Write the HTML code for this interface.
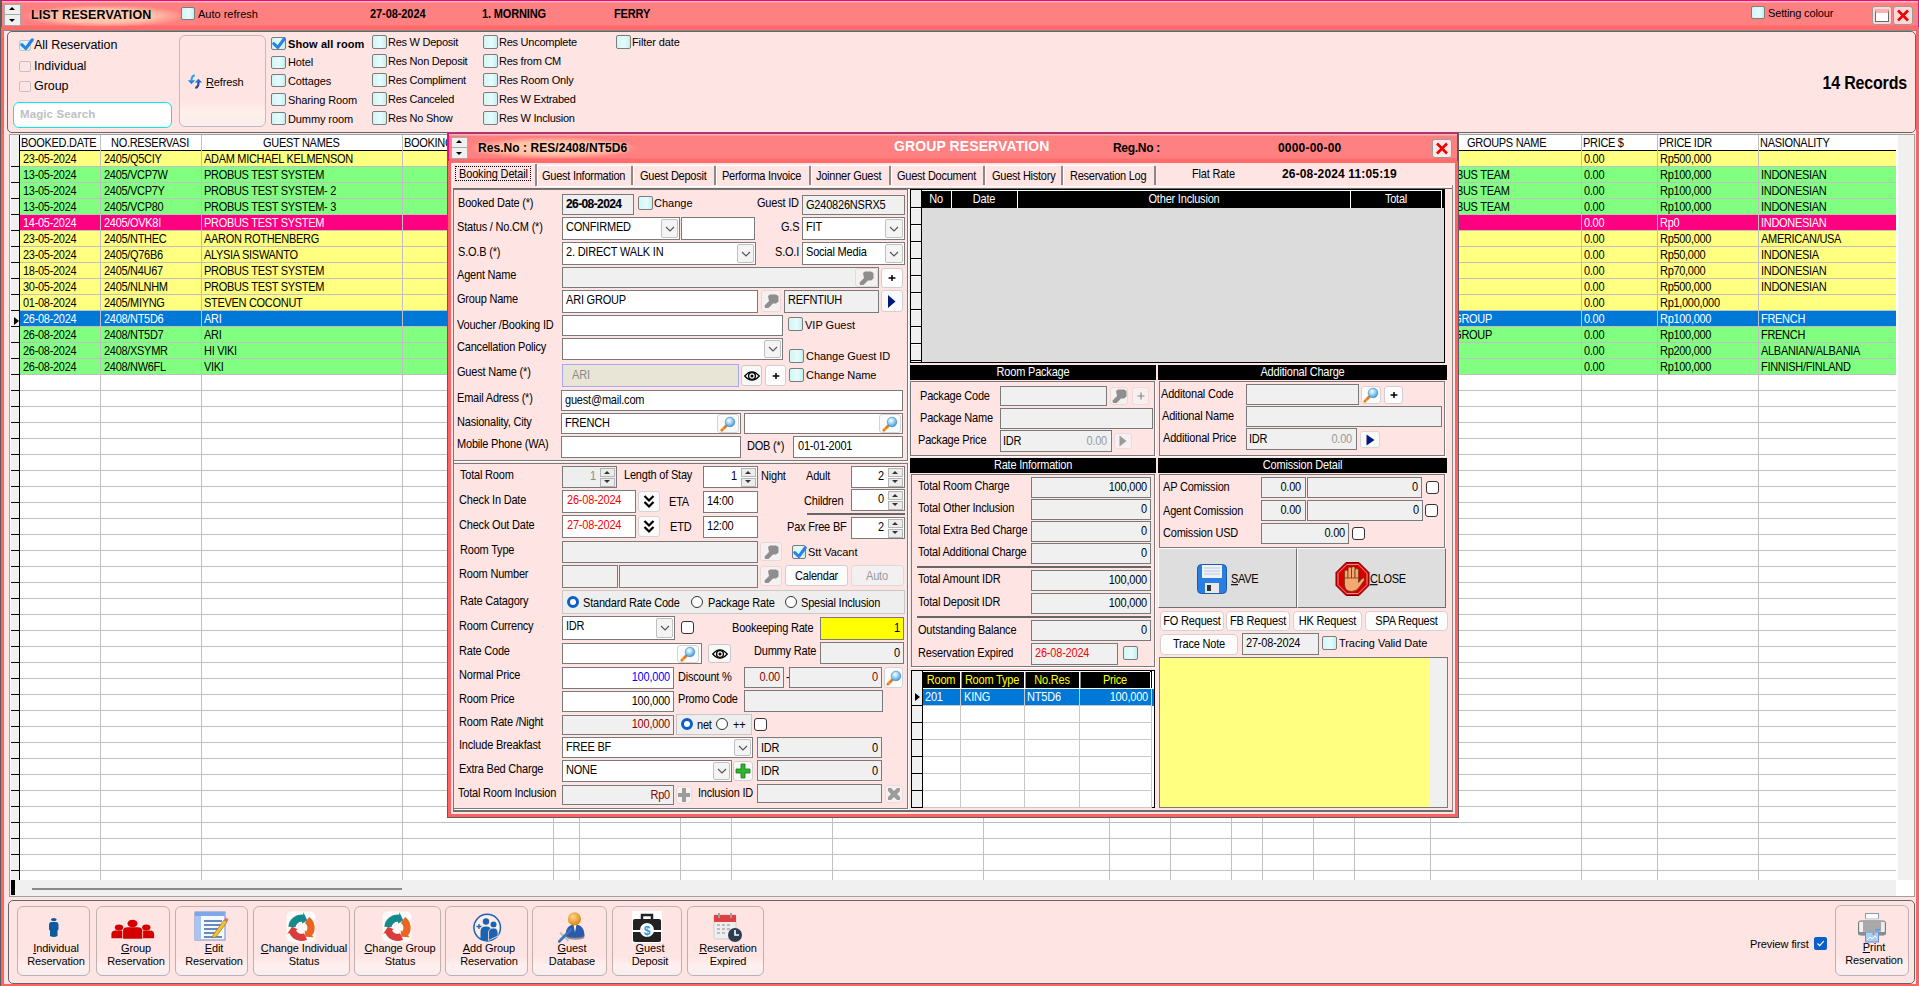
<!DOCTYPE html><html><head><meta charset="utf-8"><style>
html,body{margin:0;padding:0;width:1919px;height:986px;overflow:hidden;background:#ffe4e4}
body{position:relative;font-family:"Liberation Sans",sans-serif}
body div,body span,body svg{position:absolute}
.tx{white-space:nowrap}
svg{overflow:visible}
svg *{position:static}
u{text-decoration:underline;text-underline-offset:1px}
</style></head><body>
<div style="left:0px;top:0px;width:1919px;height:986px;background:#ff6262"></div>
<div style="left:0px;top:0px;width:1px;height:986px;background:#5a5a5a"></div>
<div style="left:1px;top:0px;width:1918px;height:1px;background:#ff0080"></div>
<div style="left:1px;top:1px;width:1px;height:26px;background:#ff0080"></div>
<div style="left:1918px;top:1px;width:1px;height:26px;background:#ff0080"></div>
<div style="left:2px;top:1px;width:1916px;height:29px;background:linear-gradient(#ffb8b8 0,#ffb8b8 1px,#ff8080 2px,#ff8080 24px,#ff6a6a 25px,#ff6a6a 29px)"></div>
<div style="left:22px;top:5px;width:165px;height:22px;background:radial-gradient(ellipse 50% 50% at 50% 50%,rgba(255,208,180,1) 0%,rgba(255,196,170,.95) 60%,rgba(255,128,128,0) 100%)"></div>
<div style="left:4px;top:30px;width:1912px;height:954px;background:#ffe4e4"></div>
<div style="left:4px;top:30px;width:1912px;height:1px;background:#8a8a8a"></div>
<div style="left:4px;top:4px;width:17px;height:22px;background:#a8a8a8"></div>
<div style="left:5px;top:5px;width:15px;height:9px;background:#f0f0f0"></div>
<div style="left:5px;top:15px;width:15px;height:10px;background:#f0f0f0"></div>
<div style="left:9px;top:7px;width:0;height:0;border-left:3px solid transparent;border-right:3px solid transparent;border-bottom:3px solid #000"></div>
<div style="left:9px;top:19px;width:0;height:0;border-left:3px solid transparent;border-right:3px solid transparent;border-top:3px solid #000"></div>
<span class="tx" style="left:31px;top:9px;font-size:12.5px;line-height:12.5px;letter-spacing:0.1px;font-weight:700;color:#000;text-shadow:0 0 2px #ffd8c0">LIST RESERVATION</span>
<div style="left:181px;top:7px;width:14px;height:13px;background:linear-gradient(90deg,#d2f6f6,#e6fbfb 60%,#c4f0f0);border:1px solid #7c7c7c;border-radius:2px;box-sizing:border-box"></div>
<span class="tx" style="left:198px;top:9px;font-size:11px;line-height:11px;letter-spacing:0px;font-weight:400;color:#000;">Auto refresh</span>
<span class="tx" style="left:370px;top:9px;font-size:11px;line-height:11px;letter-spacing:-0.08px;font-weight:700;color:#000;transform:scaleY(1.08);transform-origin:0 9px;">27-08-2024</span>
<span class="tx" style="left:482px;top:9px;font-size:11px;line-height:11px;letter-spacing:-0.15px;font-weight:700;color:#000;transform:scaleY(1.08);transform-origin:0 9px;">1. MORNING</span>
<span class="tx" style="left:614px;top:9px;font-size:11px;line-height:11px;letter-spacing:-0.15px;font-weight:700;color:#000;transform:scaleY(1.08);transform-origin:0 9px;">FERRY</span>
<div style="left:1751px;top:6px;width:14px;height:13px;background:linear-gradient(90deg,#d2f6f6,#e6fbfb 60%,#c4f0f0);border:1px solid #7c7c7c;border-radius:2px;box-sizing:border-box"></div>
<span class="tx" style="left:1768px;top:8px;font-size:11px;line-height:11px;letter-spacing:-0.15px;font-weight:400;color:#000;">Setting colour</span>
<div style="left:1872px;top:6px;width:20px;height:19px;background:#ffd8d8;border:1px solid #9a9a9a;border-radius:3px;box-sizing:border-box"></div>
<div style="left:1875px;top:9px;width:14px;height:13px;background:#fff;border:1px solid #6a6a6a;box-sizing:border-box;border-top:4px solid #ffb0b0"></div>
<div style="left:1893px;top:6px;width:20px;height:19px;background:#ffd8d8;border:1px solid #9a9a9a;border-radius:3px;box-sizing:border-box"></div>
<svg style="left:1896px;top:9px" width="14" height="13" viewBox="0 0 14 13"><path d="M2 1.5 L12 11.5 M12 1.5 L2 11.5" stroke="#f00000" stroke-width="2.6"/></svg>
<div style="left:7px;top:31px;width:1909px;height:102px;border:1px solid #666;border-radius:5px;box-sizing:border-box"></div>
<div style="left:19px;top:40px;width:12px;height:11px;background:linear-gradient(90deg,#d2f6f6,#e6fbfb 60%,#c4f0f0);border:1px solid #c4c4c4;border-radius:2px;box-sizing:border-box"></div>
<svg style="left:19px;top:40px" width="12" height="11" viewBox="0 0 12 11"><path d="M2.8 4.6 L6.8 8.5 L13.3 -0.1999999999999993" stroke="#2a82e6" stroke-width="3.1" fill="none" stroke-linecap="round" stroke-linejoin="round"/></svg>
<span class="tx" style="left:34px;top:39px;font-size:12.5px;line-height:12.5px;letter-spacing:-0.05px;font-weight:400;color:#000;">All Reservation</span>
<div style="left:19px;top:61px;width:12px;height:11px;background:transparent;border:1px solid #c8c0c0;border-radius:2px;box-sizing:border-box"></div>
<span class="tx" style="left:34px;top:60px;font-size:12.5px;line-height:12.5px;letter-spacing:-0.05px;font-weight:400;color:#000;">Individual</span>
<div style="left:19px;top:81px;width:12px;height:11px;background:transparent;border:1px solid #c8c0c0;border-radius:2px;box-sizing:border-box"></div>
<span class="tx" style="left:34px;top:80px;font-size:12.5px;line-height:12.5px;letter-spacing:-0.05px;font-weight:400;color:#000;">Group</span>
<div style="left:13px;top:102px;width:159px;height:26px;background:#fff;border:1.6px solid #00eaf0;border-radius:6px;box-sizing:border-box"></div>
<span class="tx" style="left:20px;top:109px;font-size:11.5px;line-height:11.5px;letter-spacing:0.1px;font-weight:700;color:#c0c0c0;">Magic Search</span>
<div style="left:179px;top:35px;width:87px;height:92px;border:1px solid #c8b8b8;border-radius:6px;box-sizing:border-box;background:linear-gradient(#ffe4e4 70%,#fff0ea 85%,#f8eef0)"></div>
<svg style="left:180px;top:66px" width="30" height="30" viewBox="0 0 30 30"><path d="M7.8 14.3 H15.2 L11.5 18.3z" fill="#2f7fd4"/><path d="M11.5 15 Q11.3 10.2 14.8 9.3" stroke="#2aa6e2" stroke-width="2.1" fill="none"/><path d="M14.8 16.6 H22.2 L18.5 12.8z" fill="#2a6cc4"/><path d="M18.5 16 Q18.7 21 15.3 22" stroke="#1d4f9e" stroke-width="2.1" fill="none"/></svg>
<span class="tx" style="left:206px;top:77px;font-size:11px;line-height:11px;letter-spacing:-0.15px;font-weight:400;color:#000;"><u>R</u>efresh</span>
<div style="left:271px;top:37px;width:15px;height:13px;background:linear-gradient(90deg,#d2f6f6,#e6fbfb 60%,#c4f0f0);border:1px solid #7c7c7c;border-radius:2px;box-sizing:border-box"></div>
<svg style="left:271px;top:37px" width="15" height="13" viewBox="0 0 15 13"><path d="M2.8 6.6 L6.8 10.5 L13.3 1.8000000000000007" stroke="#2a82e6" stroke-width="3.1" fill="none" stroke-linecap="round" stroke-linejoin="round"/></svg>
<span class="tx" style="left:288px;top:39px;font-size:11px;line-height:11px;letter-spacing:0.1px;font-weight:700;color:#000;">Show all room</span>
<div style="left:271px;top:56px;width:15px;height:13px;background:linear-gradient(90deg,#d2f6f6,#e6fbfb 60%,#c4f0f0);border:1px solid #7c7c7c;border-radius:2px;box-sizing:border-box"></div>
<span class="tx" style="left:288px;top:57px;font-size:11px;line-height:11px;letter-spacing:-0.1px;font-weight:400;color:#000;">Hotel</span>
<div style="left:271px;top:74px;width:15px;height:13px;background:linear-gradient(90deg,#d2f6f6,#e6fbfb 60%,#c4f0f0);border:1px solid #7c7c7c;border-radius:2px;box-sizing:border-box"></div>
<span class="tx" style="left:288px;top:76px;font-size:11px;line-height:11px;letter-spacing:-0.1px;font-weight:400;color:#000;">Cottages</span>
<div style="left:271px;top:93px;width:15px;height:13px;background:linear-gradient(90deg,#d2f6f6,#e6fbfb 60%,#c4f0f0);border:1px solid #7c7c7c;border-radius:2px;box-sizing:border-box"></div>
<span class="tx" style="left:288px;top:95px;font-size:11px;line-height:11px;letter-spacing:-0.1px;font-weight:400;color:#000;">Sharing Room</span>
<div style="left:271px;top:112px;width:15px;height:13px;background:linear-gradient(90deg,#d2f6f6,#e6fbfb 60%,#c4f0f0);border:1px solid #7c7c7c;border-radius:2px;box-sizing:border-box"></div>
<span class="tx" style="left:288px;top:114px;font-size:11px;line-height:11px;letter-spacing:-0.1px;font-weight:400;color:#000;">Dummy room</span>
<div style="left:372px;top:35px;width:15px;height:14px;background:linear-gradient(90deg,#d2f6f6,#e6fbfb 60%,#c4f0f0);border:1px solid #7c7c7c;border-radius:2px;box-sizing:border-box"></div>
<span class="tx" style="left:388px;top:37px;font-size:11px;line-height:11px;letter-spacing:-0.25px;font-weight:400;color:#000;">Res W Deposit</span>
<div style="left:372px;top:54px;width:15px;height:14px;background:linear-gradient(90deg,#d2f6f6,#e6fbfb 60%,#c4f0f0);border:1px solid #7c7c7c;border-radius:2px;box-sizing:border-box"></div>
<span class="tx" style="left:388px;top:56px;font-size:11px;line-height:11px;letter-spacing:-0.25px;font-weight:400;color:#000;">Res Non Deposit</span>
<div style="left:372px;top:73px;width:15px;height:14px;background:linear-gradient(90deg,#d2f6f6,#e6fbfb 60%,#c4f0f0);border:1px solid #7c7c7c;border-radius:2px;box-sizing:border-box"></div>
<span class="tx" style="left:388px;top:75px;font-size:11px;line-height:11px;letter-spacing:-0.25px;font-weight:400;color:#000;">Res Compliment</span>
<div style="left:372px;top:92px;width:15px;height:14px;background:linear-gradient(90deg,#d2f6f6,#e6fbfb 60%,#c4f0f0);border:1px solid #7c7c7c;border-radius:2px;box-sizing:border-box"></div>
<span class="tx" style="left:388px;top:94px;font-size:11px;line-height:11px;letter-spacing:-0.25px;font-weight:400;color:#000;">Res Canceled</span>
<div style="left:372px;top:111px;width:15px;height:14px;background:linear-gradient(90deg,#d2f6f6,#e6fbfb 60%,#c4f0f0);border:1px solid #7c7c7c;border-radius:2px;box-sizing:border-box"></div>
<span class="tx" style="left:388px;top:113px;font-size:11px;line-height:11px;letter-spacing:-0.25px;font-weight:400;color:#000;">Res No Show</span>
<div style="left:483px;top:35px;width:15px;height:14px;background:linear-gradient(90deg,#d2f6f6,#e6fbfb 60%,#c4f0f0);border:1px solid #7c7c7c;border-radius:2px;box-sizing:border-box"></div>
<span class="tx" style="left:499px;top:37px;font-size:11px;line-height:11px;letter-spacing:-0.25px;font-weight:400;color:#000;">Res Uncomplete</span>
<div style="left:483px;top:54px;width:15px;height:14px;background:linear-gradient(90deg,#d2f6f6,#e6fbfb 60%,#c4f0f0);border:1px solid #7c7c7c;border-radius:2px;box-sizing:border-box"></div>
<span class="tx" style="left:499px;top:56px;font-size:11px;line-height:11px;letter-spacing:-0.25px;font-weight:400;color:#000;">Res from CM</span>
<div style="left:483px;top:73px;width:15px;height:14px;background:linear-gradient(90deg,#d2f6f6,#e6fbfb 60%,#c4f0f0);border:1px solid #7c7c7c;border-radius:2px;box-sizing:border-box"></div>
<span class="tx" style="left:499px;top:75px;font-size:11px;line-height:11px;letter-spacing:-0.25px;font-weight:400;color:#000;">Res Room Only</span>
<div style="left:483px;top:92px;width:15px;height:14px;background:linear-gradient(90deg,#d2f6f6,#e6fbfb 60%,#c4f0f0);border:1px solid #7c7c7c;border-radius:2px;box-sizing:border-box"></div>
<span class="tx" style="left:499px;top:94px;font-size:11px;line-height:11px;letter-spacing:-0.25px;font-weight:400;color:#000;">Res W Extrabed</span>
<div style="left:483px;top:111px;width:15px;height:14px;background:linear-gradient(90deg,#d2f6f6,#e6fbfb 60%,#c4f0f0);border:1px solid #7c7c7c;border-radius:2px;box-sizing:border-box"></div>
<span class="tx" style="left:499px;top:113px;font-size:11px;line-height:11px;letter-spacing:-0.25px;font-weight:400;color:#000;">Res W Inclusion</span>
<div style="left:616px;top:35px;width:15px;height:14px;background:linear-gradient(90deg,#d2f6f6,#e6fbfb 60%,#c4f0f0);border:1px solid #7c7c7c;border-radius:2px;box-sizing:border-box"></div>
<span class="tx" style="left:632px;top:37px;font-size:11px;line-height:11px;letter-spacing:-0.1px;font-weight:400;color:#000;">Filter date</span>
<span class="tx" style="left:1507px;width:400px;text-align:right;top:76px;font-size:16px;line-height:16px;letter-spacing:-0.17px;font-weight:700;color:#000;transform:scaleY(1.15);transform-origin:0 14px;">14 Records</span>
<div style="left:9px;top:134px;width:1906px;height:763px;background:#fff;border:1px solid #a0a0a0;box-sizing:border-box"></div>
<div style="left:1896px;top:135px;width:18px;height:745px;background:#f0f0f0;border-left:2px solid #fff;box-sizing:border-box"></div>
<div style="left:10px;top:135px;width:1886px;height:15px;background:#fff"></div>
<div style="left:10px;top:150px;width:1886px;height:1px;background:#000"></div>
<div style="left:10px;top:135px;width:9px;height:745px;background:#f0f0f0;border-left:1px solid #fff;box-sizing:border-box"></div>
<div style="left:19px;top:135px;width:1px;height:745px;background:#000"></div>
<div style="left:20px;top:151px;width:1876px;height:15px;background:#ffff80"></div>
<div style="left:20px;top:167px;width:1876px;height:15px;background:#80ff80"></div>
<div style="left:20px;top:183px;width:1876px;height:15px;background:#80ff80"></div>
<div style="left:20px;top:199px;width:1876px;height:15px;background:#80ff80"></div>
<div style="left:20px;top:215px;width:1876px;height:15px;background:#ff0080"></div>
<div style="left:20px;top:231px;width:1876px;height:15px;background:#ffff80"></div>
<div style="left:20px;top:247px;width:1876px;height:15px;background:#ffff80"></div>
<div style="left:20px;top:263px;width:1876px;height:15px;background:#ffff80"></div>
<div style="left:20px;top:279px;width:1876px;height:15px;background:#ffff80"></div>
<div style="left:20px;top:295px;width:1876px;height:15px;background:#ffff80"></div>
<div style="left:20px;top:311px;width:1876px;height:15px;background:#0078d7"></div>
<div style="left:20px;top:327px;width:1876px;height:15px;background:#80ff80"></div>
<div style="left:20px;top:343px;width:1876px;height:15px;background:#80ff80"></div>
<div style="left:20px;top:359px;width:1876px;height:15px;background:#80ff80"></div>
<div style="left:20px;top:166px;width:1876px;height:1px;background:#c0c0c0"></div>
<div style="left:11px;top:166px;width:8px;height:1px;background:#000"></div>
<div style="left:20px;top:182px;width:1876px;height:1px;background:#c0c0c0"></div>
<div style="left:11px;top:182px;width:8px;height:1px;background:#000"></div>
<div style="left:20px;top:198px;width:1876px;height:1px;background:#c0c0c0"></div>
<div style="left:11px;top:198px;width:8px;height:1px;background:#000"></div>
<div style="left:20px;top:214px;width:1876px;height:1px;background:#c0c0c0"></div>
<div style="left:11px;top:214px;width:8px;height:1px;background:#000"></div>
<div style="left:20px;top:230px;width:1876px;height:1px;background:#c0c0c0"></div>
<div style="left:11px;top:230px;width:8px;height:1px;background:#000"></div>
<div style="left:20px;top:246px;width:1876px;height:1px;background:#c0c0c0"></div>
<div style="left:11px;top:246px;width:8px;height:1px;background:#000"></div>
<div style="left:20px;top:262px;width:1876px;height:1px;background:#c0c0c0"></div>
<div style="left:11px;top:262px;width:8px;height:1px;background:#000"></div>
<div style="left:20px;top:278px;width:1876px;height:1px;background:#c0c0c0"></div>
<div style="left:11px;top:278px;width:8px;height:1px;background:#000"></div>
<div style="left:20px;top:294px;width:1876px;height:1px;background:#c0c0c0"></div>
<div style="left:11px;top:294px;width:8px;height:1px;background:#000"></div>
<div style="left:20px;top:310px;width:1876px;height:1px;background:#c0c0c0"></div>
<div style="left:11px;top:310px;width:8px;height:1px;background:#000"></div>
<div style="left:20px;top:326px;width:1876px;height:1px;background:#c0c0c0"></div>
<div style="left:11px;top:326px;width:8px;height:1px;background:#000"></div>
<div style="left:20px;top:342px;width:1876px;height:1px;background:#c0c0c0"></div>
<div style="left:11px;top:342px;width:8px;height:1px;background:#000"></div>
<div style="left:20px;top:358px;width:1876px;height:1px;background:#c0c0c0"></div>
<div style="left:11px;top:358px;width:8px;height:1px;background:#000"></div>
<div style="left:20px;top:374px;width:1876px;height:1px;background:#c0c0c0"></div>
<div style="left:11px;top:374px;width:8px;height:1px;background:#000"></div>
<div style="left:20px;top:390px;width:1876px;height:1px;background:#c0c0c0"></div>
<div style="left:11px;top:390px;width:8px;height:1px;background:#000"></div>
<div style="left:20px;top:406px;width:1876px;height:1px;background:#c0c0c0"></div>
<div style="left:11px;top:406px;width:8px;height:1px;background:#000"></div>
<div style="left:20px;top:422px;width:1876px;height:1px;background:#c0c0c0"></div>
<div style="left:11px;top:422px;width:8px;height:1px;background:#000"></div>
<div style="left:20px;top:438px;width:1876px;height:1px;background:#c0c0c0"></div>
<div style="left:11px;top:438px;width:8px;height:1px;background:#000"></div>
<div style="left:20px;top:454px;width:1876px;height:1px;background:#c0c0c0"></div>
<div style="left:11px;top:454px;width:8px;height:1px;background:#000"></div>
<div style="left:20px;top:470px;width:1876px;height:1px;background:#c0c0c0"></div>
<div style="left:11px;top:470px;width:8px;height:1px;background:#000"></div>
<div style="left:20px;top:486px;width:1876px;height:1px;background:#c0c0c0"></div>
<div style="left:11px;top:486px;width:8px;height:1px;background:#000"></div>
<div style="left:20px;top:502px;width:1876px;height:1px;background:#c0c0c0"></div>
<div style="left:11px;top:502px;width:8px;height:1px;background:#000"></div>
<div style="left:20px;top:518px;width:1876px;height:1px;background:#c0c0c0"></div>
<div style="left:11px;top:518px;width:8px;height:1px;background:#000"></div>
<div style="left:20px;top:534px;width:1876px;height:1px;background:#c0c0c0"></div>
<div style="left:11px;top:534px;width:8px;height:1px;background:#000"></div>
<div style="left:20px;top:550px;width:1876px;height:1px;background:#c0c0c0"></div>
<div style="left:11px;top:550px;width:8px;height:1px;background:#000"></div>
<div style="left:20px;top:566px;width:1876px;height:1px;background:#c0c0c0"></div>
<div style="left:11px;top:566px;width:8px;height:1px;background:#000"></div>
<div style="left:20px;top:582px;width:1876px;height:1px;background:#c0c0c0"></div>
<div style="left:11px;top:582px;width:8px;height:1px;background:#000"></div>
<div style="left:20px;top:598px;width:1876px;height:1px;background:#c0c0c0"></div>
<div style="left:11px;top:598px;width:8px;height:1px;background:#000"></div>
<div style="left:20px;top:614px;width:1876px;height:1px;background:#c0c0c0"></div>
<div style="left:11px;top:614px;width:8px;height:1px;background:#000"></div>
<div style="left:20px;top:630px;width:1876px;height:1px;background:#c0c0c0"></div>
<div style="left:11px;top:630px;width:8px;height:1px;background:#000"></div>
<div style="left:20px;top:646px;width:1876px;height:1px;background:#c0c0c0"></div>
<div style="left:11px;top:646px;width:8px;height:1px;background:#000"></div>
<div style="left:20px;top:662px;width:1876px;height:1px;background:#c0c0c0"></div>
<div style="left:11px;top:662px;width:8px;height:1px;background:#000"></div>
<div style="left:20px;top:678px;width:1876px;height:1px;background:#c0c0c0"></div>
<div style="left:11px;top:678px;width:8px;height:1px;background:#000"></div>
<div style="left:20px;top:694px;width:1876px;height:1px;background:#c0c0c0"></div>
<div style="left:11px;top:694px;width:8px;height:1px;background:#000"></div>
<div style="left:20px;top:710px;width:1876px;height:1px;background:#c0c0c0"></div>
<div style="left:11px;top:710px;width:8px;height:1px;background:#000"></div>
<div style="left:20px;top:726px;width:1876px;height:1px;background:#c0c0c0"></div>
<div style="left:11px;top:726px;width:8px;height:1px;background:#000"></div>
<div style="left:20px;top:742px;width:1876px;height:1px;background:#c0c0c0"></div>
<div style="left:11px;top:742px;width:8px;height:1px;background:#000"></div>
<div style="left:20px;top:758px;width:1876px;height:1px;background:#c0c0c0"></div>
<div style="left:11px;top:758px;width:8px;height:1px;background:#000"></div>
<div style="left:20px;top:774px;width:1876px;height:1px;background:#c0c0c0"></div>
<div style="left:11px;top:774px;width:8px;height:1px;background:#000"></div>
<div style="left:20px;top:790px;width:1876px;height:1px;background:#c0c0c0"></div>
<div style="left:11px;top:790px;width:8px;height:1px;background:#000"></div>
<div style="left:20px;top:806px;width:1876px;height:1px;background:#c0c0c0"></div>
<div style="left:11px;top:806px;width:8px;height:1px;background:#000"></div>
<div style="left:20px;top:822px;width:1876px;height:1px;background:#c0c0c0"></div>
<div style="left:11px;top:822px;width:8px;height:1px;background:#000"></div>
<div style="left:20px;top:838px;width:1876px;height:1px;background:#c0c0c0"></div>
<div style="left:11px;top:838px;width:8px;height:1px;background:#000"></div>
<div style="left:20px;top:854px;width:1876px;height:1px;background:#c0c0c0"></div>
<div style="left:11px;top:854px;width:8px;height:1px;background:#000"></div>
<div style="left:20px;top:870px;width:1876px;height:1px;background:#c0c0c0"></div>
<div style="left:11px;top:870px;width:8px;height:1px;background:#000"></div>
<div style="left:100px;top:135px;width:1px;height:745px;background:#c0c0c0"></div>
<div style="left:201px;top:135px;width:1px;height:745px;background:#c0c0c0"></div>
<div style="left:402px;top:135px;width:1px;height:745px;background:#c0c0c0"></div>
<div style="left:553px;top:135px;width:1px;height:745px;background:#c0c0c0"></div>
<div style="left:579px;top:135px;width:1px;height:745px;background:#c0c0c0"></div>
<div style="left:680px;top:135px;width:1px;height:745px;background:#c0c0c0"></div>
<div style="left:731px;top:135px;width:1px;height:745px;background:#c0c0c0"></div>
<div style="left:832px;top:135px;width:1px;height:745px;background:#c0c0c0"></div>
<div style="left:983px;top:135px;width:1px;height:745px;background:#c0c0c0"></div>
<div style="left:1109px;top:135px;width:1px;height:745px;background:#c0c0c0"></div>
<div style="left:1170px;top:135px;width:1px;height:745px;background:#c0c0c0"></div>
<div style="left:1231px;top:135px;width:1px;height:745px;background:#c0c0c0"></div>
<div style="left:1262px;top:135px;width:1px;height:745px;background:#c0c0c0"></div>
<div style="left:1313px;top:135px;width:1px;height:745px;background:#c0c0c0"></div>
<div style="left:1354px;top:135px;width:1px;height:745px;background:#c0c0c0"></div>
<div style="left:1430px;top:135px;width:1px;height:745px;background:#c0c0c0"></div>
<div style="left:1581px;top:135px;width:1px;height:745px;background:#c0c0c0"></div>
<div style="left:1657px;top:135px;width:1px;height:745px;background:#c0c0c0"></div>
<div style="left:1758px;top:135px;width:1px;height:745px;background:#c0c0c0"></div>
<span class="tx" style="left:21px;top:138px;font-size:11px;line-height:11px;letter-spacing:-0.3px;font-weight:400;color:#000;transform:scaleY(1.12);transform-origin:0 9px;">BOOKED.DATE</span>
<span class="tx" style="left:111px;top:138px;font-size:11px;line-height:11px;letter-spacing:-0.3px;font-weight:400;color:#000;transform:scaleY(1.12);transform-origin:0 9px;">NO.RESERVASI</span>
<span class="tx" style="left:263px;top:138px;font-size:11px;line-height:11px;letter-spacing:-0.3px;font-weight:400;color:#000;transform:scaleY(1.12);transform-origin:0 9px;">GUEST NAMES</span>
<span class="tx" style="left:404px;top:138px;font-size:11px;line-height:11px;letter-spacing:-0.3px;font-weight:400;color:#000;transform:scaleY(1.12);transform-origin:0 9px;">BOOKING</span>
<span class="tx" style="left:1467px;top:138px;font-size:11px;line-height:11px;letter-spacing:-0.3px;font-weight:400;color:#000;transform:scaleY(1.12);transform-origin:0 9px;">GROUPS NAME</span>
<span class="tx" style="left:1583px;top:138px;font-size:11px;line-height:11px;letter-spacing:-0.3px;font-weight:400;color:#000;transform:scaleY(1.12);transform-origin:0 9px;">PRICE $</span>
<span class="tx" style="left:1659px;top:138px;font-size:11px;line-height:11px;letter-spacing:-0.3px;font-weight:400;color:#000;transform:scaleY(1.12);transform-origin:0 9px;">PRICE IDR</span>
<span class="tx" style="left:1760px;top:138px;font-size:11px;line-height:11px;letter-spacing:-0.3px;font-weight:400;color:#000;transform:scaleY(1.12);transform-origin:0 9px;">NASIONALITY</span>
<span class="tx" style="left:23px;top:154px;font-size:11px;line-height:11px;letter-spacing:-0.3px;font-weight:400;color:#000;transform:scaleY(1.12);transform-origin:0 9px;">23-05-2024</span>
<span class="tx" style="left:104px;top:154px;font-size:11px;line-height:11px;letter-spacing:-0.3px;font-weight:400;color:#000;transform:scaleY(1.12);transform-origin:0 9px;">2405/Q5CIY</span>
<span class="tx" style="left:204px;top:154px;font-size:11px;line-height:11px;letter-spacing:-0.3px;font-weight:400;color:#000;transform:scaleY(1.12);transform-origin:0 9px;">ADAM MICHAEL KELMENSON</span>
<span class="tx" style="left:1433px;top:154px;font-size:11px;line-height:11px;letter-spacing:-0.3px;font-weight:400;color:#000;transform:scaleY(1.12);transform-origin:0 9px;"></span>
<span class="tx" style="left:1584px;top:154px;font-size:11px;line-height:11px;letter-spacing:-0.3px;font-weight:400;color:#000;transform:scaleY(1.12);transform-origin:0 9px;">0.00</span>
<span class="tx" style="left:1660px;top:154px;font-size:11px;line-height:11px;letter-spacing:-0.3px;font-weight:400;color:#000;transform:scaleY(1.12);transform-origin:0 9px;">Rp500,000</span>
<span class="tx" style="left:1761px;top:154px;font-size:11px;line-height:11px;letter-spacing:-0.3px;font-weight:400;color:#000;transform:scaleY(1.12);transform-origin:0 9px;"></span>
<span class="tx" style="left:23px;top:170px;font-size:11px;line-height:11px;letter-spacing:-0.3px;font-weight:400;color:#000;transform:scaleY(1.12);transform-origin:0 9px;">13-05-2024</span>
<span class="tx" style="left:104px;top:170px;font-size:11px;line-height:11px;letter-spacing:-0.3px;font-weight:400;color:#000;transform:scaleY(1.12);transform-origin:0 9px;">2405/VCP7W</span>
<span class="tx" style="left:204px;top:170px;font-size:11px;line-height:11px;letter-spacing:-0.3px;font-weight:400;color:#000;transform:scaleY(1.12);transform-origin:0 9px;">PROBUS TEST SYSTEM</span>
<span class="tx" style="left:1433px;top:170px;font-size:11px;line-height:11px;letter-spacing:-0.3px;font-weight:400;color:#000;transform:scaleY(1.12);transform-origin:0 9px;">PROBUS TEAM</span>
<span class="tx" style="left:1584px;top:170px;font-size:11px;line-height:11px;letter-spacing:-0.3px;font-weight:400;color:#000;transform:scaleY(1.12);transform-origin:0 9px;">0.00</span>
<span class="tx" style="left:1660px;top:170px;font-size:11px;line-height:11px;letter-spacing:-0.3px;font-weight:400;color:#000;transform:scaleY(1.12);transform-origin:0 9px;">Rp100,000</span>
<span class="tx" style="left:1761px;top:170px;font-size:11px;line-height:11px;letter-spacing:-0.3px;font-weight:400;color:#000;transform:scaleY(1.12);transform-origin:0 9px;">INDONESIAN</span>
<span class="tx" style="left:23px;top:186px;font-size:11px;line-height:11px;letter-spacing:-0.3px;font-weight:400;color:#000;transform:scaleY(1.12);transform-origin:0 9px;">13-05-2024</span>
<span class="tx" style="left:104px;top:186px;font-size:11px;line-height:11px;letter-spacing:-0.3px;font-weight:400;color:#000;transform:scaleY(1.12);transform-origin:0 9px;">2405/VCP7Y</span>
<span class="tx" style="left:204px;top:186px;font-size:11px;line-height:11px;letter-spacing:-0.3px;font-weight:400;color:#000;transform:scaleY(1.12);transform-origin:0 9px;">PROBUS TEST SYSTEM- 2</span>
<span class="tx" style="left:1433px;top:186px;font-size:11px;line-height:11px;letter-spacing:-0.3px;font-weight:400;color:#000;transform:scaleY(1.12);transform-origin:0 9px;">PROBUS TEAM</span>
<span class="tx" style="left:1584px;top:186px;font-size:11px;line-height:11px;letter-spacing:-0.3px;font-weight:400;color:#000;transform:scaleY(1.12);transform-origin:0 9px;">0.00</span>
<span class="tx" style="left:1660px;top:186px;font-size:11px;line-height:11px;letter-spacing:-0.3px;font-weight:400;color:#000;transform:scaleY(1.12);transform-origin:0 9px;">Rp100,000</span>
<span class="tx" style="left:1761px;top:186px;font-size:11px;line-height:11px;letter-spacing:-0.3px;font-weight:400;color:#000;transform:scaleY(1.12);transform-origin:0 9px;">INDONESIAN</span>
<span class="tx" style="left:23px;top:202px;font-size:11px;line-height:11px;letter-spacing:-0.3px;font-weight:400;color:#000;transform:scaleY(1.12);transform-origin:0 9px;">13-05-2024</span>
<span class="tx" style="left:104px;top:202px;font-size:11px;line-height:11px;letter-spacing:-0.3px;font-weight:400;color:#000;transform:scaleY(1.12);transform-origin:0 9px;">2405/VCP80</span>
<span class="tx" style="left:204px;top:202px;font-size:11px;line-height:11px;letter-spacing:-0.3px;font-weight:400;color:#000;transform:scaleY(1.12);transform-origin:0 9px;">PROBUS TEST SYSTEM- 3</span>
<span class="tx" style="left:1433px;top:202px;font-size:11px;line-height:11px;letter-spacing:-0.3px;font-weight:400;color:#000;transform:scaleY(1.12);transform-origin:0 9px;">PROBUS TEAM</span>
<span class="tx" style="left:1584px;top:202px;font-size:11px;line-height:11px;letter-spacing:-0.3px;font-weight:400;color:#000;transform:scaleY(1.12);transform-origin:0 9px;">0.00</span>
<span class="tx" style="left:1660px;top:202px;font-size:11px;line-height:11px;letter-spacing:-0.3px;font-weight:400;color:#000;transform:scaleY(1.12);transform-origin:0 9px;">Rp100,000</span>
<span class="tx" style="left:1761px;top:202px;font-size:11px;line-height:11px;letter-spacing:-0.3px;font-weight:400;color:#000;transform:scaleY(1.12);transform-origin:0 9px;">INDONESIAN</span>
<span class="tx" style="left:23px;top:218px;font-size:11px;line-height:11px;letter-spacing:-0.3px;font-weight:400;color:#fff;transform:scaleY(1.12);transform-origin:0 9px;">14-05-2024</span>
<span class="tx" style="left:104px;top:218px;font-size:11px;line-height:11px;letter-spacing:-0.3px;font-weight:400;color:#fff;transform:scaleY(1.12);transform-origin:0 9px;">2405/OVK8I</span>
<span class="tx" style="left:204px;top:218px;font-size:11px;line-height:11px;letter-spacing:-0.3px;font-weight:400;color:#fff;transform:scaleY(1.12);transform-origin:0 9px;">PROBUS TEST SYSTEM</span>
<span class="tx" style="left:1433px;top:218px;font-size:11px;line-height:11px;letter-spacing:-0.3px;font-weight:400;color:#fff;transform:scaleY(1.12);transform-origin:0 9px;"></span>
<span class="tx" style="left:1584px;top:218px;font-size:11px;line-height:11px;letter-spacing:-0.3px;font-weight:400;color:#fff;transform:scaleY(1.12);transform-origin:0 9px;">0.00</span>
<span class="tx" style="left:1660px;top:218px;font-size:11px;line-height:11px;letter-spacing:-0.3px;font-weight:400;color:#fff;transform:scaleY(1.12);transform-origin:0 9px;">Rp0</span>
<span class="tx" style="left:1761px;top:218px;font-size:11px;line-height:11px;letter-spacing:-0.3px;font-weight:400;color:#fff;transform:scaleY(1.12);transform-origin:0 9px;">INDONESIAN</span>
<span class="tx" style="left:23px;top:234px;font-size:11px;line-height:11px;letter-spacing:-0.3px;font-weight:400;color:#000;transform:scaleY(1.12);transform-origin:0 9px;">23-05-2024</span>
<span class="tx" style="left:104px;top:234px;font-size:11px;line-height:11px;letter-spacing:-0.3px;font-weight:400;color:#000;transform:scaleY(1.12);transform-origin:0 9px;">2405/NTHEC</span>
<span class="tx" style="left:204px;top:234px;font-size:11px;line-height:11px;letter-spacing:-0.3px;font-weight:400;color:#000;transform:scaleY(1.12);transform-origin:0 9px;">AARON ROTHENBERG</span>
<span class="tx" style="left:1433px;top:234px;font-size:11px;line-height:11px;letter-spacing:-0.3px;font-weight:400;color:#000;transform:scaleY(1.12);transform-origin:0 9px;"></span>
<span class="tx" style="left:1584px;top:234px;font-size:11px;line-height:11px;letter-spacing:-0.3px;font-weight:400;color:#000;transform:scaleY(1.12);transform-origin:0 9px;">0.00</span>
<span class="tx" style="left:1660px;top:234px;font-size:11px;line-height:11px;letter-spacing:-0.3px;font-weight:400;color:#000;transform:scaleY(1.12);transform-origin:0 9px;">Rp500,000</span>
<span class="tx" style="left:1761px;top:234px;font-size:11px;line-height:11px;letter-spacing:-0.3px;font-weight:400;color:#000;transform:scaleY(1.12);transform-origin:0 9px;">AMERICAN/USA</span>
<span class="tx" style="left:23px;top:250px;font-size:11px;line-height:11px;letter-spacing:-0.3px;font-weight:400;color:#000;transform:scaleY(1.12);transform-origin:0 9px;">23-05-2024</span>
<span class="tx" style="left:104px;top:250px;font-size:11px;line-height:11px;letter-spacing:-0.3px;font-weight:400;color:#000;transform:scaleY(1.12);transform-origin:0 9px;">2405/Q76B6</span>
<span class="tx" style="left:204px;top:250px;font-size:11px;line-height:11px;letter-spacing:-0.3px;font-weight:400;color:#000;transform:scaleY(1.12);transform-origin:0 9px;">ALYSIA SISWANTO</span>
<span class="tx" style="left:1433px;top:250px;font-size:11px;line-height:11px;letter-spacing:-0.3px;font-weight:400;color:#000;transform:scaleY(1.12);transform-origin:0 9px;"></span>
<span class="tx" style="left:1584px;top:250px;font-size:11px;line-height:11px;letter-spacing:-0.3px;font-weight:400;color:#000;transform:scaleY(1.12);transform-origin:0 9px;">0.00</span>
<span class="tx" style="left:1660px;top:250px;font-size:11px;line-height:11px;letter-spacing:-0.3px;font-weight:400;color:#000;transform:scaleY(1.12);transform-origin:0 9px;">Rp50,000</span>
<span class="tx" style="left:1761px;top:250px;font-size:11px;line-height:11px;letter-spacing:-0.3px;font-weight:400;color:#000;transform:scaleY(1.12);transform-origin:0 9px;">INDONESIA</span>
<span class="tx" style="left:23px;top:266px;font-size:11px;line-height:11px;letter-spacing:-0.3px;font-weight:400;color:#000;transform:scaleY(1.12);transform-origin:0 9px;">18-05-2024</span>
<span class="tx" style="left:104px;top:266px;font-size:11px;line-height:11px;letter-spacing:-0.3px;font-weight:400;color:#000;transform:scaleY(1.12);transform-origin:0 9px;">2405/N4U67</span>
<span class="tx" style="left:204px;top:266px;font-size:11px;line-height:11px;letter-spacing:-0.3px;font-weight:400;color:#000;transform:scaleY(1.12);transform-origin:0 9px;">PROBUS TEST SYSTEM</span>
<span class="tx" style="left:1433px;top:266px;font-size:11px;line-height:11px;letter-spacing:-0.3px;font-weight:400;color:#000;transform:scaleY(1.12);transform-origin:0 9px;"></span>
<span class="tx" style="left:1584px;top:266px;font-size:11px;line-height:11px;letter-spacing:-0.3px;font-weight:400;color:#000;transform:scaleY(1.12);transform-origin:0 9px;">0.00</span>
<span class="tx" style="left:1660px;top:266px;font-size:11px;line-height:11px;letter-spacing:-0.3px;font-weight:400;color:#000;transform:scaleY(1.12);transform-origin:0 9px;">Rp70,000</span>
<span class="tx" style="left:1761px;top:266px;font-size:11px;line-height:11px;letter-spacing:-0.3px;font-weight:400;color:#000;transform:scaleY(1.12);transform-origin:0 9px;">INDONESIAN</span>
<span class="tx" style="left:23px;top:282px;font-size:11px;line-height:11px;letter-spacing:-0.3px;font-weight:400;color:#000;transform:scaleY(1.12);transform-origin:0 9px;">30-05-2024</span>
<span class="tx" style="left:104px;top:282px;font-size:11px;line-height:11px;letter-spacing:-0.3px;font-weight:400;color:#000;transform:scaleY(1.12);transform-origin:0 9px;">2405/NLNHM</span>
<span class="tx" style="left:204px;top:282px;font-size:11px;line-height:11px;letter-spacing:-0.3px;font-weight:400;color:#000;transform:scaleY(1.12);transform-origin:0 9px;">PROBUS TEST SYSTEM</span>
<span class="tx" style="left:1433px;top:282px;font-size:11px;line-height:11px;letter-spacing:-0.3px;font-weight:400;color:#000;transform:scaleY(1.12);transform-origin:0 9px;"></span>
<span class="tx" style="left:1584px;top:282px;font-size:11px;line-height:11px;letter-spacing:-0.3px;font-weight:400;color:#000;transform:scaleY(1.12);transform-origin:0 9px;">0.00</span>
<span class="tx" style="left:1660px;top:282px;font-size:11px;line-height:11px;letter-spacing:-0.3px;font-weight:400;color:#000;transform:scaleY(1.12);transform-origin:0 9px;">Rp500,000</span>
<span class="tx" style="left:1761px;top:282px;font-size:11px;line-height:11px;letter-spacing:-0.3px;font-weight:400;color:#000;transform:scaleY(1.12);transform-origin:0 9px;">INDONESIAN</span>
<span class="tx" style="left:23px;top:298px;font-size:11px;line-height:11px;letter-spacing:-0.3px;font-weight:400;color:#000;transform:scaleY(1.12);transform-origin:0 9px;">01-08-2024</span>
<span class="tx" style="left:104px;top:298px;font-size:11px;line-height:11px;letter-spacing:-0.3px;font-weight:400;color:#000;transform:scaleY(1.12);transform-origin:0 9px;">2405/MIYNG</span>
<span class="tx" style="left:204px;top:298px;font-size:11px;line-height:11px;letter-spacing:-0.3px;font-weight:400;color:#000;transform:scaleY(1.12);transform-origin:0 9px;">STEVEN COCONUT</span>
<span class="tx" style="left:1433px;top:298px;font-size:11px;line-height:11px;letter-spacing:-0.3px;font-weight:400;color:#000;transform:scaleY(1.12);transform-origin:0 9px;"></span>
<span class="tx" style="left:1584px;top:298px;font-size:11px;line-height:11px;letter-spacing:-0.3px;font-weight:400;color:#000;transform:scaleY(1.12);transform-origin:0 9px;">0.00</span>
<span class="tx" style="left:1660px;top:298px;font-size:11px;line-height:11px;letter-spacing:-0.3px;font-weight:400;color:#000;transform:scaleY(1.12);transform-origin:0 9px;">Rp1,000,000</span>
<span class="tx" style="left:1761px;top:298px;font-size:11px;line-height:11px;letter-spacing:-0.3px;font-weight:400;color:#000;transform:scaleY(1.12);transform-origin:0 9px;"></span>
<span class="tx" style="left:23px;top:314px;font-size:11px;line-height:11px;letter-spacing:-0.3px;font-weight:400;color:#fff;transform:scaleY(1.12);transform-origin:0 9px;">26-08-2024</span>
<span class="tx" style="left:104px;top:314px;font-size:11px;line-height:11px;letter-spacing:-0.3px;font-weight:400;color:#fff;transform:scaleY(1.12);transform-origin:0 9px;">2408/NT5D6</span>
<span class="tx" style="left:204px;top:314px;font-size:11px;line-height:11px;letter-spacing:-0.3px;font-weight:400;color:#fff;transform:scaleY(1.12);transform-origin:0 9px;">ARI</span>
<span class="tx" style="left:1433px;top:314px;font-size:11px;line-height:11px;letter-spacing:-0.3px;font-weight:400;color:#fff;transform:scaleY(1.12);transform-origin:0 9px;">ARI GROUP</span>
<span class="tx" style="left:1584px;top:314px;font-size:11px;line-height:11px;letter-spacing:-0.3px;font-weight:400;color:#fff;transform:scaleY(1.12);transform-origin:0 9px;">0.00</span>
<span class="tx" style="left:1660px;top:314px;font-size:11px;line-height:11px;letter-spacing:-0.3px;font-weight:400;color:#fff;transform:scaleY(1.12);transform-origin:0 9px;">Rp100,000</span>
<span class="tx" style="left:1761px;top:314px;font-size:11px;line-height:11px;letter-spacing:-0.3px;font-weight:400;color:#fff;transform:scaleY(1.12);transform-origin:0 9px;">FRENCH</span>
<span class="tx" style="left:23px;top:330px;font-size:11px;line-height:11px;letter-spacing:-0.3px;font-weight:400;color:#000;transform:scaleY(1.12);transform-origin:0 9px;">26-08-2024</span>
<span class="tx" style="left:104px;top:330px;font-size:11px;line-height:11px;letter-spacing:-0.3px;font-weight:400;color:#000;transform:scaleY(1.12);transform-origin:0 9px;">2408/NT5D7</span>
<span class="tx" style="left:204px;top:330px;font-size:11px;line-height:11px;letter-spacing:-0.3px;font-weight:400;color:#000;transform:scaleY(1.12);transform-origin:0 9px;">ARI</span>
<span class="tx" style="left:1433px;top:330px;font-size:11px;line-height:11px;letter-spacing:-0.3px;font-weight:400;color:#000;transform:scaleY(1.12);transform-origin:0 9px;">ARI GROUP</span>
<span class="tx" style="left:1584px;top:330px;font-size:11px;line-height:11px;letter-spacing:-0.3px;font-weight:400;color:#000;transform:scaleY(1.12);transform-origin:0 9px;">0.00</span>
<span class="tx" style="left:1660px;top:330px;font-size:11px;line-height:11px;letter-spacing:-0.3px;font-weight:400;color:#000;transform:scaleY(1.12);transform-origin:0 9px;">Rp100,000</span>
<span class="tx" style="left:1761px;top:330px;font-size:11px;line-height:11px;letter-spacing:-0.3px;font-weight:400;color:#000;transform:scaleY(1.12);transform-origin:0 9px;">FRENCH</span>
<span class="tx" style="left:23px;top:346px;font-size:11px;line-height:11px;letter-spacing:-0.3px;font-weight:400;color:#000;transform:scaleY(1.12);transform-origin:0 9px;">26-08-2024</span>
<span class="tx" style="left:104px;top:346px;font-size:11px;line-height:11px;letter-spacing:-0.3px;font-weight:400;color:#000;transform:scaleY(1.12);transform-origin:0 9px;">2408/XSYMR</span>
<span class="tx" style="left:204px;top:346px;font-size:11px;line-height:11px;letter-spacing:-0.3px;font-weight:400;color:#000;transform:scaleY(1.12);transform-origin:0 9px;">HI VIKI</span>
<span class="tx" style="left:1433px;top:346px;font-size:11px;line-height:11px;letter-spacing:-0.3px;font-weight:400;color:#000;transform:scaleY(1.12);transform-origin:0 9px;"></span>
<span class="tx" style="left:1584px;top:346px;font-size:11px;line-height:11px;letter-spacing:-0.3px;font-weight:400;color:#000;transform:scaleY(1.12);transform-origin:0 9px;">0.00</span>
<span class="tx" style="left:1660px;top:346px;font-size:11px;line-height:11px;letter-spacing:-0.3px;font-weight:400;color:#000;transform:scaleY(1.12);transform-origin:0 9px;">Rp200,000</span>
<span class="tx" style="left:1761px;top:346px;font-size:11px;line-height:11px;letter-spacing:-0.3px;font-weight:400;color:#000;transform:scaleY(1.12);transform-origin:0 9px;">ALBANIAN/ALBANIA</span>
<span class="tx" style="left:23px;top:362px;font-size:11px;line-height:11px;letter-spacing:-0.3px;font-weight:400;color:#000;transform:scaleY(1.12);transform-origin:0 9px;">26-08-2024</span>
<span class="tx" style="left:104px;top:362px;font-size:11px;line-height:11px;letter-spacing:-0.3px;font-weight:400;color:#000;transform:scaleY(1.12);transform-origin:0 9px;">2408/NW6FL</span>
<span class="tx" style="left:204px;top:362px;font-size:11px;line-height:11px;letter-spacing:-0.3px;font-weight:400;color:#000;transform:scaleY(1.12);transform-origin:0 9px;">VIKI</span>
<span class="tx" style="left:1433px;top:362px;font-size:11px;line-height:11px;letter-spacing:-0.3px;font-weight:400;color:#000;transform:scaleY(1.12);transform-origin:0 9px;"></span>
<span class="tx" style="left:1584px;top:362px;font-size:11px;line-height:11px;letter-spacing:-0.3px;font-weight:400;color:#000;transform:scaleY(1.12);transform-origin:0 9px;">0.00</span>
<span class="tx" style="left:1660px;top:362px;font-size:11px;line-height:11px;letter-spacing:-0.3px;font-weight:400;color:#000;transform:scaleY(1.12);transform-origin:0 9px;">Rp100,000</span>
<span class="tx" style="left:1761px;top:362px;font-size:11px;line-height:11px;letter-spacing:-0.3px;font-weight:400;color:#000;transform:scaleY(1.12);transform-origin:0 9px;">FINNISH/FINLAND</span>
<div style="left:14px;top:317px;width:0;height:0;border-top:4px solid transparent;border-bottom:4px solid transparent;border-left:5px solid #000"></div>
<div style="left:10px;top:880px;width:1886px;height:16px;background:#f0f0f0"></div>
<div style="left:11px;top:880px;width:4px;height:15px;background:#000"></div>
<div style="left:32px;top:888px;width:370px;height:2px;background:#8a8a8a"></div>
<div style="left:8px;top:900px;width:1907px;height:84px;border:1px solid #666;border-radius:5px;box-sizing:border-box"></div>
<div style="left:17px;top:906px;width:73px;height:70px;border:1px solid #c0b0b0;border-radius:6px;box-sizing:border-box;background:linear-gradient(#ffe4e4 72%,#fff0ee 86%,#f6eef2)"></div>
<div style="left:37px;top:911px;width:32px;height:34px;"><svg width="32" height="32" viewBox="0 0 32 32"><ellipse cx="16.8" cy="8.6" rx="2.9" ry="1.6" fill="#0d5aa0"/><path d="M12 14 Q12 11 14.5 11 H19 Q21.5 11 21.5 14 V18 Q21.5 19 20.5 19.5 V25 Q16.8 27.2 13 25 V19.5 Q12 19 12 18 Z" fill="#0d5aa0"/></svg></div>
<span class="tx" style="left:-244px;width:600px;text-align:center;top:943px;font-size:11px;line-height:11px;letter-spacing:-0.1px;font-weight:400;color:#000;"><u>I</u>ndividual</span>
<span class="tx" style="left:-244px;width:600px;text-align:center;top:956px;font-size:11px;line-height:11px;letter-spacing:-0.1px;font-weight:400;color:#000;">Reservation</span>
<div style="left:96px;top:906px;width:74px;height:70px;border:1px solid #c0b0b0;border-radius:6px;box-sizing:border-box;background:linear-gradient(#ffe4e4 72%,#fff0ee 86%,#f6eef2)"></div>
<div style="left:110px;top:911px;width:46px;height:34px;"><svg width="46" height="32" viewBox="0 0 46 32"><g transform="translate(0.5,8)"><ellipse cx="22" cy="4.5" rx="5" ry="3.8" fill="#d40000"/><ellipse cx="8.5" cy="8.5" rx="4.2" ry="2.9" fill="#d40000"/><ellipse cx="35.8" cy="8.5" rx="4.2" ry="2.9" fill="#d40000"/><path d="M12.5 19.7 V12 Q12.5 8.3 17 8.3 H27 Q32 8.3 32 12 V19.7 Z" fill="#d40000"/><path d="M0.9 19.2 V15 Q0.9 11.4 5 11.4 H12 V19.2 Z" fill="#d40000"/><path d="M32.5 11.4 H39.5 Q43.6 11.4 43.6 15 V19.2 H32.5 Z" fill="#d40000"/><path d="M12.2 11 V19.5 M32.2 11 V19.5" stroke="#ffe4e4" stroke-width=".5"/></g></svg></div>
<span class="tx" style="left:-164px;width:600px;text-align:center;top:943px;font-size:11px;line-height:11px;letter-spacing:-0.1px;font-weight:400;color:#000;"><u>G</u>roup</span>
<span class="tx" style="left:-164px;width:600px;text-align:center;top:956px;font-size:11px;line-height:11px;letter-spacing:-0.1px;font-weight:400;color:#000;">Reservation</span>
<div style="left:175px;top:906px;width:73px;height:70px;border:1px solid #c0b0b0;border-radius:6px;box-sizing:border-box;background:linear-gradient(#ffe4e4 72%,#fff0ee 86%,#f6eef2)"></div>
<div style="left:194px;top:911px;width:34px;height:34px;"><svg width="34" height="32" viewBox="0 0 34 32"><rect x="1" y="1" width="30" height="28" fill="#f4f8ff" stroke="#6d8fcf"/><rect x="1" y="1" width="30" height="4" fill="#7fa6e6"/><rect x="1" y="5" width="6" height="24" fill="#a9c4f2"/><path d="M10 10h18M10 14h18M10 18h16M10 22h14M10 26h18" stroke="#3a62b0" stroke-width="1.3"/><path d="M19 24 L30 9 L33 11 L22 26 L18 27z" fill="#f2c230" stroke="#8a6a10" stroke-width=".6"/><path d="M30 9 L32 6.5 L34.5 8.5 L33 11z" fill="#e07070"/></svg></div>
<span class="tx" style="left:-86px;width:600px;text-align:center;top:943px;font-size:11px;line-height:11px;letter-spacing:-0.1px;font-weight:400;color:#000;"><u>E</u>dit</span>
<span class="tx" style="left:-86px;width:600px;text-align:center;top:956px;font-size:11px;line-height:11px;letter-spacing:-0.1px;font-weight:400;color:#000;">Reservation</span>
<div style="left:253px;top:906px;width:97px;height:70px;border:1px solid #c0b0b0;border-radius:6px;box-sizing:border-box;background:linear-gradient(#ffe4e4 72%,#fff0ee 86%,#f6eef2)"></div>
<div style="left:285px;top:911px;width:32px;height:34px;"><svg width="32" height="32" viewBox="0 0 32 32"><rect x="1.5" y="0.5" width="29" height="31" rx="5" fill="#fff" opacity=".8"/><path d="M3.35 15.65 A13.2 13.2 0 0 1 18.11 3.70 L18.41 1.22 L22.28 9.13 L16.99 12.83 L17.23 10.84 A6 6 0 0 0 10.52 16.28 Z" fill="#158a8c"/><path d="M24.07 5.99 A13.2 13.2 0 0 1 27.04 24.74 L29.04 26.25 L20.25 25.64 L19.69 19.21 L21.29 20.41 A6 6 0 0 0 19.94 11.89 Z" fill="#ea6520"/><path d="M22.08 28.76 A13.2 13.2 0 0 1 4.35 21.96 L2.05 22.93 L6.97 15.63 L12.82 18.36 L10.98 19.14 A6 6 0 0 0 19.04 22.24 Z" fill="#d83c3c"/></svg></div>
<span class="tx" style="left:4px;width:600px;text-align:center;top:943px;font-size:11px;line-height:11px;letter-spacing:-0.1px;font-weight:400;color:#000;"><u>C</u>hange Individual</span>
<span class="tx" style="left:4px;width:600px;text-align:center;top:956px;font-size:11px;line-height:11px;letter-spacing:-0.1px;font-weight:400;color:#000;">Status</span>
<div style="left:354px;top:906px;width:87px;height:70px;border:1px solid #c0b0b0;border-radius:6px;box-sizing:border-box;background:linear-gradient(#ffe4e4 72%,#fff0ee 86%,#f6eef2)"></div>
<div style="left:381px;top:911px;width:32px;height:34px;"><svg width="32" height="32" viewBox="0 0 32 32"><rect x="1.5" y="0.5" width="29" height="31" rx="5" fill="#fff" opacity=".8"/><path d="M3.35 15.65 A13.2 13.2 0 0 1 18.11 3.70 L18.41 1.22 L22.28 9.13 L16.99 12.83 L17.23 10.84 A6 6 0 0 0 10.52 16.28 Z" fill="#158a8c"/><path d="M24.07 5.99 A13.2 13.2 0 0 1 27.04 24.74 L29.04 26.25 L20.25 25.64 L19.69 19.21 L21.29 20.41 A6 6 0 0 0 19.94 11.89 Z" fill="#ea6520"/><path d="M22.08 28.76 A13.2 13.2 0 0 1 4.35 21.96 L2.05 22.93 L6.97 15.63 L12.82 18.36 L10.98 19.14 A6 6 0 0 0 19.04 22.24 Z" fill="#d83c3c"/></svg></div>
<span class="tx" style="left:100px;width:600px;text-align:center;top:943px;font-size:11px;line-height:11px;letter-spacing:-0.1px;font-weight:400;color:#000;"><u>C</u>hange Group</span>
<span class="tx" style="left:100px;width:600px;text-align:center;top:956px;font-size:11px;line-height:11px;letter-spacing:-0.1px;font-weight:400;color:#000;">Status</span>
<div style="left:445px;top:906px;width:83px;height:70px;border:1px solid #c0b0b0;border-radius:6px;box-sizing:border-box;background:linear-gradient(#ffe4e4 72%,#fff0ee 86%,#f6eef2)"></div>
<div style="left:470px;top:911px;width:32px;height:34px;"><svg width="32" height="32" viewBox="0 0 32 32"><circle cx="17.2" cy="16.6" r="13.3" fill="#fff" fill-opacity=".35" stroke="#1a63b0" stroke-width="1.5"/><path d="M6.5 15.5h5M9 13v5" stroke="#1a63b0" stroke-width="1.3"/><circle cx="16" cy="10.5" r="3.2" fill="#1a63b0"/><circle cx="23.5" cy="13.5" r="3" fill="#1a63b0"/><path d="M10.5 29 v-8.5 q0 -5 5.5 -5 q5.5 0 5.5 5 v9.5z" fill="#1a63b0"/><path d="M18.5 29.5 v-7.5 q0 -5 5 -5 q4.5 0 4.5 5 v3z" fill="#1a63b0" stroke="#ffe4e4" stroke-width=".8"/></svg></div>
<span class="tx" style="left:189px;width:600px;text-align:center;top:943px;font-size:11px;line-height:11px;letter-spacing:-0.1px;font-weight:400;color:#000;"><u>A</u>dd Group</span>
<span class="tx" style="left:189px;width:600px;text-align:center;top:956px;font-size:11px;line-height:11px;letter-spacing:-0.1px;font-weight:400;color:#000;">Reservation</span>
<div style="left:532px;top:906px;width:75px;height:70px;border:1px solid #c0b0b0;border-radius:6px;box-sizing:border-box;background:linear-gradient(#ffe4e4 72%,#fff0ee 86%,#f6eef2)"></div>
<div style="left:553px;top:911px;width:32px;height:34px;"><svg width="32" height="34" viewBox="-3 0 32 34"><defs><radialGradient id="hg" cx="40%" cy="35%" r="65%"><stop offset="0" stop-color="#ffd890"/><stop offset="1" stop-color="#d8860c"/></radialGradient></defs><ellipse cx="19.5" cy="26.5" rx="9" ry="2.2" fill="#444" opacity=".55"/><path d="M9.5 25.5 Q9.5 13.5 19 13.5 Q28.5 13.5 28.5 25.5 Q19 28 9.5 25.5z" fill="#2a5aa8"/><path d="M17.6 14 L19 21.5 L20.4 14z" fill="#fff"/><circle cx="18.4" cy="7.9" r="6.6" fill="url(#hg)"/><path d="M4 21.5 L12.5 30" stroke="#b8c0c8" stroke-width="2"/><path d="M3.2 30.5 L15 18.5" stroke="#3f73b8" stroke-width="2.6" stroke-linecap="round"/></svg></div>
<span class="tx" style="left:272px;width:600px;text-align:center;top:943px;font-size:11px;line-height:11px;letter-spacing:-0.1px;font-weight:400;color:#000;"><u>G</u>uest</span>
<span class="tx" style="left:272px;width:600px;text-align:center;top:956px;font-size:11px;line-height:11px;letter-spacing:-0.1px;font-weight:400;color:#000;">Database</span>
<div style="left:612px;top:906px;width:70px;height:70px;border:1px solid #c0b0b0;border-radius:6px;box-sizing:border-box;background:linear-gradient(#ffe4e4 72%,#fff0ee 86%,#f6eef2)"></div>
<div style="left:632px;top:911px;width:30px;height:34px;"><svg width="30" height="32" viewBox="0 0 30 32"><rect x="0" y="0" width="30" height="32" fill="#fff"/><rect x="1" y="8" width="28" height="23" rx="2" fill="#222"/><path d="M10 8 v-4 h10 v4" stroke="#222" stroke-width="2.5" fill="none"/><rect x="1" y="19" width="28" height="2" fill="#fff"/><circle cx="15" cy="19" r="7" fill="#fff"/><text x="15" y="23.5" font-size="12" font-weight="700" fill="#1aa0e8" text-anchor="middle" font-family="Liberation Sans">$</text></svg></div>
<span class="tx" style="left:350px;width:600px;text-align:center;top:943px;font-size:11px;line-height:11px;letter-spacing:-0.1px;font-weight:400;color:#000;"><u>G</u>uest</span>
<span class="tx" style="left:350px;width:600px;text-align:center;top:956px;font-size:11px;line-height:11px;letter-spacing:-0.1px;font-weight:400;color:#000;">Deposit</span>
<div style="left:687px;top:906px;width:77px;height:70px;border:1px solid #c0b0b0;border-radius:6px;box-sizing:border-box;background:linear-gradient(#ffe4e4 72%,#fff0ee 86%,#f6eef2)"></div>
<div style="left:709px;top:911px;width:32px;height:34px;"><svg width="32" height="32" viewBox="-3 0 32 32"><rect x="2" y="4" width="22" height="24" rx="1.5" fill="#eeeeee" stroke="#cfcfcf"/><rect x="2" y="4" width="22" height="7" fill="#e04040"/><path d="M7 2v5M19 2v5" stroke="#a0a0a0" stroke-width="2"/><path d="M5 14h3M10 14h3M15 14h3M5 18h3M10 18h3M15 18h3M5 22h3M10 22h3" stroke="#bbbbbb" stroke-width="2"/><circle cx="23" cy="24" r="7" fill="#2d3e50"/><path d="M23 19v5h4" stroke="#fff" stroke-width="1.6" fill="none"/></svg></div>
<span class="tx" style="left:428px;width:600px;text-align:center;top:943px;font-size:11px;line-height:11px;letter-spacing:-0.1px;font-weight:400;color:#000;"><u>R</u>eservation</span>
<span class="tx" style="left:428px;width:600px;text-align:center;top:956px;font-size:11px;line-height:11px;letter-spacing:-0.1px;font-weight:400;color:#000;">Expired</span>
<div style="left:1835px;top:905px;width:74px;height:71px;border:1px solid #c0b0b0;border-radius:6px;box-sizing:border-box;background:linear-gradient(#ffe4e4 72%,#fff0ee 86%,#f6eef2)"></div>
<svg style="left:1857px;top:912px" width="30" height="30" viewBox="0 0 30 30"><rect x="8.5" y="1.5" width="13" height="9" fill="#fff" stroke="#8a9aaa"/><path d="M7 9 L9 6 H21 L23 9z" fill="#ddd"/><rect x="1.5" y="9" width="27" height="14" rx="2" fill="#d0d0d0" stroke="#7a7a7a"/><rect x="6" y="9.5" width="18" height="10" fill="#a9a9a9"/><rect x="2.5" y="10" width="3.5" height="12" fill="#f2f2f2"/><rect x="24" y="10" width="3.5" height="12" fill="#ededed"/><rect x="18" y="17" width="5" height="1.5" fill="#4a9cf0"/><rect x="1.5" y="20" width="27" height="3" fill="#8c8c8c"/><rect x="8.5" y="20" width="13" height="10" fill="#a8d0f4" stroke="#6d8fcf"/><path d="M10 28 l3-3 l2 2 l3-3 l2 2" stroke="#fff" fill="none"/><circle cx="16.5" cy="22" r="1" fill="#f06040"/></svg>
<span class="tx" style="left:1574px;width:600px;text-align:center;top:942px;font-size:11px;line-height:11px;letter-spacing:0px;font-weight:400;color:#000;"><u>P</u>rint</span>
<span class="tx" style="left:1574px;width:600px;text-align:center;top:955px;font-size:11px;line-height:11px;letter-spacing:-0.1px;font-weight:400;color:#000;">Reservation</span>
<span class="tx" style="left:1750px;top:939px;font-size:11px;line-height:11px;letter-spacing:-0.1px;font-weight:400;color:#000;">Preview first</span>
<div style="left:1814px;top:937px;width:13px;height:13px;background:#0b5fc8;border-radius:2px"></div>
<svg style="left:1815px;top:938px" width="11" height="11" viewBox="0 0 11 11"><path d="M2.5 5.5 L4.7 7.7 L8.7 3.2" stroke="#fff" stroke-width="1.2" fill="none"/></svg>
<div style="left:447px;top:133px;width:1012px;height:685px;background:#5e5e5e"></div>
<div style="left:448px;top:133px;width:1010px;height:684px;background:#ff6262"></div>
<div style="left:448px;top:133px;width:1010px;height:1px;background:#ff0080"></div>
<div style="left:448px;top:133px;width:1px;height:28px;background:#ff0080"></div>
<div style="left:1457px;top:133px;width:1px;height:28px;background:#ff0080"></div>
<div style="left:449px;top:134px;width:1008px;height:29px;background:linear-gradient(#ffb0b0 0,#ffb0b0 1px,#ff8080 2px,#ff8080 24px,#ff6a6a 25px)"></div>
<div style="left:468px;top:137px;width:170px;height:22px;background:radial-gradient(ellipse 50% 50% at 50% 50%,rgba(255,208,180,1) 0%,rgba(255,196,170,.95) 60%,rgba(255,128,128,0) 100%)"></div>
<div style="left:451px;top:137px;width:17px;height:22px;background:#a8a8a8"></div>
<div style="left:452px;top:138px;width:15px;height:9px;background:#f0f0f0"></div>
<div style="left:452px;top:148px;width:15px;height:10px;background:#f0f0f0"></div>
<div style="left:456px;top:140px;width:0;height:0;border-left:3px solid transparent;border-right:3px solid transparent;border-bottom:3px solid #000"></div>
<div style="left:456px;top:152px;width:0;height:0;border-left:3px solid transparent;border-right:3px solid transparent;border-top:3px solid #000"></div>
<span class="tx" style="left:478px;top:142px;font-size:12px;line-height:12px;letter-spacing:0.05px;font-weight:700;color:#000;text-shadow:0 0 3px #ffd0b0">Res.No : RES/2408/NT5D6</span>
<span class="tx" style="left:894px;top:139px;font-size:14px;line-height:14px;letter-spacing:0.1px;font-weight:700;color:#fff;">GROUP RESERVATION</span>
<span class="tx" style="left:1113px;top:142px;font-size:12px;line-height:12px;letter-spacing:-0.3px;font-weight:700;color:#000;">Reg.No :</span>
<span class="tx" style="left:1278px;top:142px;font-size:12px;line-height:12px;letter-spacing:0.2px;font-weight:700;color:#000;">0000-00-00</span>
<div style="left:1432px;top:139px;width:20px;height:19px;background:#ffe8e8;border:1px solid #9a9a9a;border-radius:3px;box-sizing:border-box"></div>
<svg style="left:1435px;top:142px" width="14" height="13" viewBox="0 0 14 13"><path d="M2 1.5 L12 11.5 M12 1.5 L2 11.5" stroke="#f00000" stroke-width="2.6"/></svg>
<div style="left:451px;top:163px;width:1004px;height:651px;background:#ffe4e4"></div>
<div style="left:451px;top:186px;width:1004px;height:1px;background:#fff"></div>
<div style="left:453px;top:188px;width:1000px;height:624px;border:1px solid #6e6e6e;border-bottom:2px solid #6e6e6e;box-sizing:border-box"></div>
<div style="left:452px;top:163px;width:84px;height:24px;background:#ffe4e4;border-top:1px solid #fff;border-left:1px solid #fff;box-sizing:border-box"></div>
<div style="left:535px;top:164px;width:2px;height:22px;background:#8a8a8a"></div>
<div style="left:537px;top:165px;width:94px;height:21px;border-top:1px solid #fff;border-left:1px solid #fff;box-sizing:border-box"></div>
<div style="left:631px;top:166px;width:2px;height:19px;background:#8a8a8a"></div>
<div style="left:633px;top:165px;width:81px;height:21px;border-top:1px solid #fff;border-left:1px solid #fff;box-sizing:border-box"></div>
<div style="left:714px;top:166px;width:2px;height:19px;background:#8a8a8a"></div>
<div style="left:716px;top:165px;width:93px;height:21px;border-top:1px solid #fff;border-left:1px solid #fff;box-sizing:border-box"></div>
<div style="left:809px;top:166px;width:2px;height:19px;background:#8a8a8a"></div>
<div style="left:811px;top:165px;width:78px;height:21px;border-top:1px solid #fff;border-left:1px solid #fff;box-sizing:border-box"></div>
<div style="left:889px;top:166px;width:2px;height:19px;background:#8a8a8a"></div>
<div style="left:891px;top:165px;width:92px;height:21px;border-top:1px solid #fff;border-left:1px solid #fff;box-sizing:border-box"></div>
<div style="left:983px;top:166px;width:2px;height:19px;background:#8a8a8a"></div>
<div style="left:985px;top:165px;width:76px;height:21px;border-top:1px solid #fff;border-left:1px solid #fff;box-sizing:border-box"></div>
<div style="left:1061px;top:166px;width:2px;height:19px;background:#8a8a8a"></div>
<div style="left:1063px;top:165px;width:91px;height:21px;border-top:1px solid #fff;border-left:1px solid #fff;box-sizing:border-box"></div>
<div style="left:1154px;top:166px;width:2px;height:19px;background:#8a8a8a"></div>
<div style="left:455px;top:166px;width:76px;height:15px;border:1px dotted #000;box-sizing:border-box"></div>
<span class="tx" style="left:459px;top:169px;font-size:11px;line-height:11px;letter-spacing:-0.15px;font-weight:400;color:#000;transform:scaleY(1.12);transform-origin:0 9px;">Booking Detail</span>
<span class="tx" style="left:542px;top:171px;font-size:11px;line-height:11px;letter-spacing:-0.25px;font-weight:400;color:#000;transform:scaleY(1.12);transform-origin:0 9px;">Guest Information</span>
<span class="tx" style="left:640px;top:171px;font-size:11px;line-height:11px;letter-spacing:-0.25px;font-weight:400;color:#000;transform:scaleY(1.12);transform-origin:0 9px;">Guest Deposit</span>
<span class="tx" style="left:722px;top:171px;font-size:11px;line-height:11px;letter-spacing:-0.25px;font-weight:400;color:#000;transform:scaleY(1.12);transform-origin:0 9px;">Performa Invoice</span>
<span class="tx" style="left:816px;top:171px;font-size:11px;line-height:11px;letter-spacing:-0.25px;font-weight:400;color:#000;transform:scaleY(1.12);transform-origin:0 9px;">Joinner Guest</span>
<span class="tx" style="left:897px;top:171px;font-size:11px;line-height:11px;letter-spacing:-0.25px;font-weight:400;color:#000;transform:scaleY(1.12);transform-origin:0 9px;">Guest Document</span>
<span class="tx" style="left:992px;top:171px;font-size:11px;line-height:11px;letter-spacing:-0.25px;font-weight:400;color:#000;transform:scaleY(1.12);transform-origin:0 9px;">Guest History</span>
<span class="tx" style="left:1070px;top:171px;font-size:11px;line-height:11px;letter-spacing:-0.25px;font-weight:400;color:#000;transform:scaleY(1.12);transform-origin:0 9px;">Reservation Log</span>
<span class="tx" style="left:1192px;top:169px;font-size:11px;line-height:11px;letter-spacing:-0.2px;font-weight:400;color:#000;transform:scaleY(1.12);transform-origin:0 9px;">Flat Rate</span>
<span class="tx" style="left:1282px;top:168px;font-size:12px;line-height:12px;letter-spacing:0.15px;font-weight:700;color:#000;">26-08-2024 11:05:19</span>
<div style="left:453px;top:189px;width:455px;height:272px;border:1px solid #7a7a7a;box-shadow:1px 1px 0 #fff;box-sizing:border-box"></div>
<span class="tx" style="left:458px;top:198px;font-size:11px;line-height:11px;letter-spacing:-0.2px;font-weight:400;color:#000;transform:scaleY(1.12);transform-origin:0 9px;">Booked Date (*)</span>
<div style="left:562px;top:194px;width:72px;height:21px;background:#f0f0f0;border:1px solid #7a7a7a;box-sizing:border-box;"></div>
<span class="tx" style="left:566px;top:198px;font-size:12px;line-height:12px;letter-spacing:-0.6px;font-weight:700;color:#000;text-shadow:0 0 1px rgba(0,60,200,.25)">26-08-2024</span>
<div style="left:638px;top:196px;width:15px;height:14px;background:linear-gradient(90deg,#d2f6f6,#e6fbfb 60%,#c4f0f0);border:1px solid #7c7c7c;border-radius:2px;box-sizing:border-box"></div>
<span class="tx" style="left:654px;top:198px;font-size:11px;line-height:11px;letter-spacing:0px;font-weight:400;color:#000;">Change</span>
<span class="tx" style="left:757px;top:198px;font-size:11px;line-height:11px;letter-spacing:-0.2px;font-weight:400;color:#000;transform:scaleY(1.12);transform-origin:0 9px;">Guest ID</span>
<div style="left:802px;top:195px;width:103px;height:20px;background:#f0f0f0;border:1px solid #7a7a7a;box-sizing:border-box;"></div>
<span class="tx" style="left:806px;top:200px;font-size:11px;line-height:11px;letter-spacing:-0.2px;font-weight:400;color:#000;transform:scaleY(1.12);transform-origin:0 9px;">G240826NSRX5</span>
<span class="tx" style="left:457px;top:222px;font-size:11px;line-height:11px;letter-spacing:-0.2px;font-weight:400;color:#000;transform:scaleY(1.12);transform-origin:0 9px;">Status / No.CM (*)</span>
<div style="left:562px;top:217px;width:118px;height:23px;background:#fff;border:1px solid #7a7a7a;box-sizing:border-box;"></div>
<div style="left:661px;top:219px;width:17px;height:19px;background:#f4f4f4;border:1px solid #c0c0c0;border-radius:2px;box-sizing:border-box"></div>
<svg style="left:664.5px;top:225.5px" width="10" height="6" viewBox="0 0 10 6"><path d="M1 1 L5 5 L9 1" stroke="#555" stroke-width="1.1" fill="none"/></svg>
<span class="tx" style="left:566px;top:222px;font-size:11px;line-height:11px;letter-spacing:-0.2px;font-weight:400;color:#000;transform:scaleY(1.12);transform-origin:0 9px;">CONFIRMED</span>
<div style="left:681px;top:217px;width:74px;height:23px;background:#fff;border:1px solid #7a7a7a;box-sizing:border-box;"></div>
<span class="tx" style="left:781px;top:222px;font-size:11px;line-height:11px;letter-spacing:-0.2px;font-weight:400;color:#000;transform:scaleY(1.12);transform-origin:0 9px;">G.S</span>
<div style="left:802px;top:217px;width:103px;height:23px;background:#fff;border:1px solid #7a7a7a;box-sizing:border-box;"></div>
<div style="left:885px;top:219px;width:18px;height:19px;background:#f4f4f4;border:1px solid #c0c0c0;border-radius:2px;box-sizing:border-box"></div>
<svg style="left:889.0px;top:225.5px" width="10" height="6" viewBox="0 0 10 6"><path d="M1 1 L5 5 L9 1" stroke="#555" stroke-width="1.1" fill="none"/></svg>
<span class="tx" style="left:806px;top:222px;font-size:11px;line-height:11px;letter-spacing:-0.2px;font-weight:400;color:#000;transform:scaleY(1.12);transform-origin:0 9px;">FIT</span>
<span class="tx" style="left:458px;top:247px;font-size:11px;line-height:11px;letter-spacing:-0.2px;font-weight:400;color:#000;transform:scaleY(1.12);transform-origin:0 9px;">S.O.B (*)</span>
<div style="left:562px;top:242px;width:194px;height:23px;background:#fff;border:1px solid #7a7a7a;box-sizing:border-box;"></div>
<div style="left:737px;top:244px;width:17px;height:19px;background:#f4f4f4;border:1px solid #c0c0c0;border-radius:2px;box-sizing:border-box"></div>
<svg style="left:740.5px;top:250.5px" width="10" height="6" viewBox="0 0 10 6"><path d="M1 1 L5 5 L9 1" stroke="#555" stroke-width="1.1" fill="none"/></svg>
<span class="tx" style="left:566px;top:247px;font-size:11px;line-height:11px;letter-spacing:-0.2px;font-weight:400;color:#000;transform:scaleY(1.12);transform-origin:0 9px;">2. DIRECT WALK IN</span>
<span class="tx" style="left:775px;top:247px;font-size:11px;line-height:11px;letter-spacing:-0.2px;font-weight:400;color:#000;transform:scaleY(1.12);transform-origin:0 9px;">S.O.I</span>
<div style="left:802px;top:242px;width:103px;height:23px;background:#fff;border:1px solid #7a7a7a;box-sizing:border-box;"></div>
<div style="left:885px;top:244px;width:18px;height:19px;background:#f4f4f4;border:1px solid #c0c0c0;border-radius:2px;box-sizing:border-box"></div>
<svg style="left:889.0px;top:250.5px" width="10" height="6" viewBox="0 0 10 6"><path d="M1 1 L5 5 L9 1" stroke="#555" stroke-width="1.1" fill="none"/></svg>
<span class="tx" style="left:806px;top:247px;font-size:11px;line-height:11px;letter-spacing:-0.2px;font-weight:400;color:#000;transform:scaleY(1.12);transform-origin:0 9px;">Social Media</span>
<span class="tx" style="left:457px;top:270px;font-size:11px;line-height:11px;letter-spacing:-0.2px;font-weight:400;color:#000;transform:scaleY(1.12);transform-origin:0 9px;">Agent Name</span>
<div style="left:562px;top:267px;width:317px;height:21px;background:#f0f0f0;border:1px solid #7a7a7a;box-sizing:border-box;"></div>
<div style="left:855px;top:268px;width:23px;height:19px;background:#f6f0f0;border:1px solid #e4dada;border-radius:3px;box-sizing:border-box"></div>
<svg style="left:859.0px;top:270.5px" width="16" height="15" viewBox="0 0 16 15"><path d="M4 2 L6 0.5 L12 0.5 L14.5 2 L14.5 7.5 L12 9.5 L9 9.5 L4.5 14 L1 14 L0.5 11.5 L5 7 Z" fill="#8e8e8e"/></svg>
<div style="left:881px;top:268px;width:22px;height:20px;background:#fdfdfd;border:1px solid #cfcfcf;border-radius:3px;box-sizing:border-box"></div>
<svg style="left:888.0px;top:274.0px" width="8" height="8" viewBox="0 0 8 8"><path d="M4 1V7M0.6 4H7.4" stroke="#000" stroke-width="1.5"/></svg>
<span class="tx" style="left:457px;top:294px;font-size:11px;line-height:11px;letter-spacing:-0.2px;font-weight:400;color:#000;transform:scaleY(1.12);transform-origin:0 9px;">Group Name</span>
<div style="left:562px;top:290px;width:196px;height:23px;background:#fff;border:1px solid #7a7a7a;box-sizing:border-box;"></div>
<span class="tx" style="left:566px;top:295px;font-size:11px;line-height:11px;letter-spacing:-0.2px;font-weight:400;color:#000;transform:scaleY(1.12);transform-origin:0 9px;">ARI GROUP</span>
<div style="left:761px;top:290px;width:20px;height:22px;background:#f6f0f0;border:1px solid #e4dada;border-radius:3px;box-sizing:border-box"></div>
<svg style="left:763.5px;top:294.0px" width="16" height="15" viewBox="0 0 16 15"><path d="M4 2 L6 0.5 L12 0.5 L14.5 2 L14.5 7.5 L12 9.5 L9 9.5 L4.5 14 L1 14 L0.5 11.5 L5 7 Z" fill="#8e8e8e"/></svg>
<div style="left:784px;top:290px;width:95px;height:23px;background:#f0f0f0;border:1px solid #7a7a7a;box-sizing:border-box;"></div>
<span class="tx" style="left:788px;top:295px;font-size:11px;line-height:11px;letter-spacing:-0.2px;font-weight:400;color:#000;transform:scaleY(1.12);transform-origin:0 9px;">REFNTIUH</span>
<div style="left:881px;top:290px;width:22px;height:22px;background:#fafafa;border:1px solid #d0d0d0;border-radius:3px;box-sizing:border-box"></div>
<svg style="left:888px;top:295px" width="8" height="13" viewBox="0 0 8 13"><path d="M0 0 L7.5 6.5 L0 13z" fill="#001a80"/></svg>
<span class="tx" style="left:457px;top:320px;font-size:11px;line-height:11px;letter-spacing:-0.2px;font-weight:400;color:#000;transform:scaleY(1.12);transform-origin:0 9px;">Voucher /Booking ID</span>
<div style="left:562px;top:315px;width:221px;height:21px;background:#fff;border:1px solid #7a7a7a;box-sizing:border-box;"></div>
<div style="left:788px;top:317px;width:15px;height:14px;background:linear-gradient(90deg,#d2f6f6,#e6fbfb 60%,#c4f0f0);border:1px solid #7c7c7c;border-radius:2px;box-sizing:border-box"></div>
<span class="tx" style="left:805px;top:320px;font-size:11px;line-height:11px;letter-spacing:0px;font-weight:400;color:#000;">VIP Guest</span>
<span class="tx" style="left:457px;top:342px;font-size:11px;line-height:11px;letter-spacing:-0.2px;font-weight:400;color:#000;transform:scaleY(1.12);transform-origin:0 9px;">Cancellation Policy</span>
<div style="left:562px;top:338px;width:221px;height:22px;background:#fff;border:1px solid #7a7a7a;box-sizing:border-box;"></div>
<div style="left:764px;top:340px;width:17px;height:18px;background:#f4f4f4;border:1px solid #c0c0c0;border-radius:2px;box-sizing:border-box"></div>
<svg style="left:767.5px;top:346.0px" width="10" height="6" viewBox="0 0 10 6"><path d="M1 1 L5 5 L9 1" stroke="#555" stroke-width="1.1" fill="none"/></svg>
<span class="tx" style="left:566px;top:342px;font-size:11px;line-height:11px;letter-spacing:-0.2px;font-weight:400;color:#000;transform:scaleY(1.12);transform-origin:0 9px;"></span>
<div style="left:789px;top:349px;width:15px;height:14px;background:linear-gradient(90deg,#d2f6f6,#e6fbfb 60%,#c4f0f0);border:1px solid #7c7c7c;border-radius:2px;box-sizing:border-box"></div>
<span class="tx" style="left:806px;top:351px;font-size:11px;line-height:11px;letter-spacing:-0.05px;font-weight:400;color:#000;">Change Guest ID</span>
<span class="tx" style="left:457px;top:367px;font-size:11px;line-height:11px;letter-spacing:-0.2px;font-weight:400;color:#000;transform:scaleY(1.12);transform-origin:0 9px;">Guest Name (*)</span>
<div style="left:562px;top:364px;width:177px;height:23px;background:#e9e5d6;border:1px solid #a8a8f0;box-sizing:border-box;"></div>
<span class="tx" style="left:572px;top:370px;font-size:11px;line-height:11px;letter-spacing:-0.2px;font-weight:400;color:#8a8a8a;transform:scaleY(1.12);transform-origin:0 9px;">ARI</span>
<div style="left:741px;top:365px;width:21px;height:21px;background:#f8f8f8;border:1px solid #c8c8c8;border-radius:3px;box-sizing:border-box"></div>
<svg style="left:743.5px;top:369.5px" width="16" height="12" viewBox="0 0 16 12"><path d="M0.8 6 Q8 -2.2 15.2 6 Q8 14.2 0.8 6z" fill="#fff" stroke="#000" stroke-width="1.3"/><circle cx="8" cy="6" r="3.4" fill="#fff" stroke="#000" stroke-width="1.4"/><circle cx="8" cy="6" r="1.5" fill="#000"/></svg>
<div style="left:765px;top:365px;width:21px;height:21px;background:#fdfdfd;border:1px solid #cfcfcf;border-radius:3px;box-sizing:border-box"></div>
<svg style="left:771.5px;top:371.5px" width="8" height="8" viewBox="0 0 8 8"><path d="M4 1V7M0.6 4H7.4" stroke="#000" stroke-width="1.5"/></svg>
<div style="left:789px;top:368px;width:15px;height:14px;background:linear-gradient(90deg,#d2f6f6,#e6fbfb 60%,#c4f0f0);border:1px solid #7c7c7c;border-radius:2px;box-sizing:border-box"></div>
<span class="tx" style="left:806px;top:370px;font-size:11px;line-height:11px;letter-spacing:-0.05px;font-weight:400;color:#000;">Change Name</span>
<span class="tx" style="left:457px;top:393px;font-size:11px;line-height:11px;letter-spacing:-0.2px;font-weight:400;color:#000;transform:scaleY(1.12);transform-origin:0 9px;">Email Adress (*)</span>
<div style="left:561px;top:390px;width:342px;height:21px;background:#fff;border:1px solid #7a7a7a;box-sizing:border-box;"></div>
<span class="tx" style="left:565px;top:395px;font-size:11px;line-height:11px;letter-spacing:-0.2px;font-weight:400;color:#000;transform:scaleY(1.12);transform-origin:0 9px;">guest@mail.com</span>
<span class="tx" style="left:457px;top:417px;font-size:11px;line-height:11px;letter-spacing:-0.2px;font-weight:400;color:#000;transform:scaleY(1.12);transform-origin:0 9px;">Nasionality, City</span>
<div style="left:561px;top:413px;width:180px;height:21px;background:#fff;border:1px solid #7a7a7a;box-sizing:border-box;"></div>
<span class="tx" style="left:565px;top:418px;font-size:11px;line-height:11px;letter-spacing:-0.2px;font-weight:400;color:#000;transform:scaleY(1.12);transform-origin:0 9px;">FRENCH</span>
<div style="left:717px;top:414px;width:22px;height:19px;background:#fbfbfb;border:1px solid #d4d4d4;border-radius:3px;box-sizing:border-box"></div>
<svg style="left:720.0px;top:415.5px" width="16" height="16" viewBox="0 0 16 16"><defs><radialGradient id="lg" cx="40%" cy="35%" r="70%"><stop offset="0" stop-color="#fff"/><stop offset=".45" stop-color="#9fd6f6"/><stop offset="1" stop-color="#3d8fd0"/></radialGradient></defs><path d="M1.8 14.2 L6.3 9.7" stroke="#f07a1a" stroke-width="2.8" stroke-linecap="round"/><path d="M2.5 12.3 L4 13.8" stroke="#ffd040" stroke-width=".9"/><path d="M6 10 L7.4 8.6" stroke="#888" stroke-width="1.8"/><circle cx="10" cy="6" r="4.8" fill="url(#lg)" stroke="#4d8fc4" stroke-width=".7"/></svg>
<div style="left:744px;top:413px;width:159px;height:21px;background:#fff;border:1px solid #7a7a7a;box-sizing:border-box;"></div>
<div style="left:879px;top:414px;width:22px;height:19px;background:#fbfbfb;border:1px solid #d4d4d4;border-radius:3px;box-sizing:border-box"></div>
<svg style="left:882.0px;top:415.5px" width="16" height="16" viewBox="0 0 16 16"><defs><radialGradient id="lg" cx="40%" cy="35%" r="70%"><stop offset="0" stop-color="#fff"/><stop offset=".45" stop-color="#9fd6f6"/><stop offset="1" stop-color="#3d8fd0"/></radialGradient></defs><path d="M1.8 14.2 L6.3 9.7" stroke="#f07a1a" stroke-width="2.8" stroke-linecap="round"/><path d="M2.5 12.3 L4 13.8" stroke="#ffd040" stroke-width=".9"/><path d="M6 10 L7.4 8.6" stroke="#888" stroke-width="1.8"/><circle cx="10" cy="6" r="4.8" fill="url(#lg)" stroke="#4d8fc4" stroke-width=".7"/></svg>
<span class="tx" style="left:457px;top:439px;font-size:11px;line-height:11px;letter-spacing:-0.2px;font-weight:400;color:#000;transform:scaleY(1.12);transform-origin:0 9px;">Mobile Phone (WA)</span>
<div style="left:561px;top:436px;width:180px;height:22px;background:#fff;border:1px solid #7a7a7a;box-sizing:border-box;"></div>
<span class="tx" style="left:747px;top:441px;font-size:11px;line-height:11px;letter-spacing:-0.2px;font-weight:400;color:#000;transform:scaleY(1.12);transform-origin:0 9px;">DOB (*)</span>
<div style="left:793px;top:436px;width:110px;height:22px;background:#fff;border:1px solid #7a7a7a;box-sizing:border-box;"></div>
<span class="tx" style="left:798px;top:441px;font-size:11px;line-height:11px;letter-spacing:-0.2px;font-weight:400;color:#000;transform:scaleY(1.12);transform-origin:0 9px;">01-01-2001</span>
<div style="left:453px;top:463px;width:455px;height:346px;border:1px solid #7a7a7a;box-shadow:1px 1px 0 #fff;box-sizing:border-box"></div>
<span class="tx" style="left:460px;top:470px;font-size:11px;line-height:11px;letter-spacing:-0.2px;font-weight:400;color:#000;transform:scaleY(1.12);transform-origin:0 9px;">Total Room</span>
<div style="left:562px;top:466px;width:55px;height:22px;background:#eeeeee;border:1px solid #7a7a7a;box-sizing:border-box;"></div>
<div style="left:600px;top:468px;width:15px;height:9px;background:#ececec;border:1px solid #b4b4b4;box-sizing:border-box"></div>
<div style="left:600px;top:478px;width:15px;height:9px;background:#ececec;border:1px solid #b4b4b4;box-sizing:border-box"></div>
<div style="left:604px;top:471px;width:0;height:0;border-left:3.5px solid transparent;border-right:3.5px solid transparent;border-bottom:3.5px solid #333"></div>
<div style="left:604px;top:480px;width:0;height:0;border-left:3.5px solid transparent;border-right:3.5px solid transparent;border-top:3.5px solid #333"></div>
<span class="tx" style="left:196px;width:400px;text-align:right;top:471px;font-size:11px;line-height:11px;letter-spacing:-0.2px;font-weight:400;color:#8a8a8a;transform:scaleY(1.12);transform-origin:0 9px;">1</span>
<span class="tx" style="left:624px;top:470px;font-size:11px;line-height:11px;letter-spacing:-0.2px;font-weight:400;color:#000;transform:scaleY(1.12);transform-origin:0 9px;">Length of Stay</span>
<div style="left:703px;top:466px;width:55px;height:22px;background:#fff;border:1px solid #7a7a7a;box-sizing:border-box;"></div>
<div style="left:741px;top:468px;width:15px;height:9px;background:#ececec;border:1px solid #b4b4b4;box-sizing:border-box"></div>
<div style="left:741px;top:478px;width:15px;height:9px;background:#ececec;border:1px solid #b4b4b4;box-sizing:border-box"></div>
<div style="left:745px;top:471px;width:0;height:0;border-left:3.5px solid transparent;border-right:3.5px solid transparent;border-bottom:3.5px solid #333"></div>
<div style="left:745px;top:480px;width:0;height:0;border-left:3.5px solid transparent;border-right:3.5px solid transparent;border-top:3.5px solid #333"></div>
<span class="tx" style="left:337px;width:400px;text-align:right;top:471px;font-size:11px;line-height:11px;letter-spacing:-0.2px;font-weight:400;color:#000;transform:scaleY(1.12);transform-origin:0 9px;">1</span>
<span class="tx" style="left:761px;top:471px;font-size:11px;line-height:11px;letter-spacing:-0.2px;font-weight:400;color:#000;transform:scaleY(1.12);transform-origin:0 9px;">Night</span>
<span class="tx" style="left:806px;top:471px;font-size:11px;line-height:11px;letter-spacing:-0.2px;font-weight:400;color:#000;transform:scaleY(1.12);transform-origin:0 9px;">Adult</span>
<div style="left:851px;top:466px;width:54px;height:22px;background:#fff;border:1px solid #7a7a7a;box-sizing:border-box;"></div>
<div style="left:888px;top:468px;width:15px;height:9px;background:#ececec;border:1px solid #b4b4b4;box-sizing:border-box"></div>
<div style="left:888px;top:478px;width:15px;height:9px;background:#ececec;border:1px solid #b4b4b4;box-sizing:border-box"></div>
<div style="left:892px;top:471px;width:0;height:0;border-left:3.5px solid transparent;border-right:3.5px solid transparent;border-bottom:3.5px solid #333"></div>
<div style="left:892px;top:480px;width:0;height:0;border-left:3.5px solid transparent;border-right:3.5px solid transparent;border-top:3.5px solid #333"></div>
<span class="tx" style="left:484px;width:400px;text-align:right;top:471px;font-size:11px;line-height:11px;letter-spacing:-0.2px;font-weight:400;color:#000;transform:scaleY(1.12);transform-origin:0 9px;">2</span>
<span class="tx" style="left:459px;top:495px;font-size:11px;line-height:11px;letter-spacing:-0.2px;font-weight:400;color:#000;transform:scaleY(1.12);transform-origin:0 9px;">Check In Date</span>
<div style="left:562px;top:490px;width:74px;height:23px;background:#fff;border:1px solid #7a7a7a;box-sizing:border-box;"></div>
<span class="tx" style="left:567px;top:495px;font-size:11px;line-height:11px;letter-spacing:-0.2px;font-weight:400;color:#ff0000;transform:scaleY(1.12);transform-origin:0 9px;">26-08-2024</span>
<div style="left:638px;top:491px;width:22px;height:21px;background:#fafafa;border:1px solid #d4d4d4;border-radius:3px;box-sizing:border-box"></div>
<svg style="left:643px;top:494px" width="12" height="15" viewBox="0 0 12 15"><path d="M1.5 2 L6 6.5 L10.5 2 M1.5 8 L6 12.5 L10.5 8" stroke="#000" stroke-width="2.2" fill="none"/></svg>
<span class="tx" style="left:669px;top:497px;font-size:11px;line-height:11px;letter-spacing:-0.2px;font-weight:400;color:#000;transform:scaleY(1.12);transform-origin:0 9px;">ETA</span>
<div style="left:703px;top:491px;width:55px;height:22px;background:#fff;border:1px solid #7a7a7a;box-sizing:border-box;"></div>
<span class="tx" style="left:707px;top:496px;font-size:11px;line-height:11px;letter-spacing:-0.2px;font-weight:400;color:#000;transform:scaleY(1.12);transform-origin:0 9px;">14:00</span>
<span class="tx" style="left:804px;top:496px;font-size:11px;line-height:11px;letter-spacing:-0.2px;font-weight:400;color:#000;transform:scaleY(1.12);transform-origin:0 9px;">Children</span>
<div style="left:851px;top:489px;width:54px;height:22px;background:#fff;border:1px solid #7a7a7a;box-sizing:border-box;"></div>
<div style="left:888px;top:491px;width:15px;height:9px;background:#ececec;border:1px solid #b4b4b4;box-sizing:border-box"></div>
<div style="left:888px;top:501px;width:15px;height:9px;background:#ececec;border:1px solid #b4b4b4;box-sizing:border-box"></div>
<div style="left:892px;top:494px;width:0;height:0;border-left:3.5px solid transparent;border-right:3.5px solid transparent;border-bottom:3.5px solid #333"></div>
<div style="left:892px;top:503px;width:0;height:0;border-left:3.5px solid transparent;border-right:3.5px solid transparent;border-top:3.5px solid #333"></div>
<span class="tx" style="left:484px;width:400px;text-align:right;top:494px;font-size:11px;line-height:11px;letter-spacing:-0.2px;font-weight:400;color:#000;transform:scaleY(1.12);transform-origin:0 9px;">0</span>
<div style="left:807px;top:513px;width:98px;height:2px;background:#666"></div>
<span class="tx" style="left:459px;top:520px;font-size:11px;line-height:11px;letter-spacing:-0.2px;font-weight:400;color:#000;transform:scaleY(1.12);transform-origin:0 9px;">Check Out Date</span>
<div style="left:562px;top:515px;width:74px;height:23px;background:#fff;border:1px solid #7a7a7a;box-sizing:border-box;"></div>
<span class="tx" style="left:567px;top:520px;font-size:11px;line-height:11px;letter-spacing:-0.2px;font-weight:400;color:#ff0000;transform:scaleY(1.12);transform-origin:0 9px;">27-08-2024</span>
<div style="left:638px;top:516px;width:22px;height:21px;background:#fafafa;border:1px solid #d4d4d4;border-radius:3px;box-sizing:border-box"></div>
<svg style="left:643px;top:519px" width="12" height="15" viewBox="0 0 12 15"><path d="M1.5 2 L6 6.5 L10.5 2 M1.5 8 L6 12.5 L10.5 8" stroke="#000" stroke-width="2.2" fill="none"/></svg>
<span class="tx" style="left:670px;top:522px;font-size:11px;line-height:11px;letter-spacing:-0.2px;font-weight:400;color:#000;transform:scaleY(1.12);transform-origin:0 9px;">ETD</span>
<div style="left:703px;top:516px;width:55px;height:22px;background:#fff;border:1px solid #7a7a7a;box-sizing:border-box;"></div>
<span class="tx" style="left:707px;top:521px;font-size:11px;line-height:11px;letter-spacing:-0.2px;font-weight:400;color:#000;transform:scaleY(1.12);transform-origin:0 9px;">12:00</span>
<span class="tx" style="left:787px;top:522px;font-size:11px;line-height:11px;letter-spacing:-0.2px;font-weight:400;color:#000;transform:scaleY(1.12);transform-origin:0 9px;">Pax Free BF</span>
<div style="left:851px;top:517px;width:54px;height:22px;background:#fff;border:1px solid #7a7a7a;box-sizing:border-box;"></div>
<div style="left:888px;top:519px;width:15px;height:9px;background:#ececec;border:1px solid #b4b4b4;box-sizing:border-box"></div>
<div style="left:888px;top:529px;width:15px;height:9px;background:#ececec;border:1px solid #b4b4b4;box-sizing:border-box"></div>
<div style="left:892px;top:522px;width:0;height:0;border-left:3.5px solid transparent;border-right:3.5px solid transparent;border-bottom:3.5px solid #333"></div>
<div style="left:892px;top:531px;width:0;height:0;border-left:3.5px solid transparent;border-right:3.5px solid transparent;border-top:3.5px solid #333"></div>
<span class="tx" style="left:484px;width:400px;text-align:right;top:522px;font-size:11px;line-height:11px;letter-spacing:-0.2px;font-weight:400;color:#000;transform:scaleY(1.12);transform-origin:0 9px;">2</span>
<span class="tx" style="left:460px;top:545px;font-size:11px;line-height:11px;letter-spacing:-0.2px;font-weight:400;color:#000;transform:scaleY(1.12);transform-origin:0 9px;">Room Type</span>
<div style="left:562px;top:541px;width:196px;height:22px;background:#f0f0f0;border:1px solid #7a7a7a;box-sizing:border-box;"></div>
<div style="left:760px;top:542px;width:22px;height:19px;background:#f6f0f0;border:1px solid #e4dada;border-radius:3px;box-sizing:border-box"></div>
<svg style="left:763.5px;top:544.5px" width="16" height="15" viewBox="0 0 16 15"><path d="M4 2 L6 0.5 L12 0.5 L14.5 2 L14.5 7.5 L12 9.5 L9 9.5 L4.5 14 L1 14 L0.5 11.5 L5 7 Z" fill="#8e8e8e"/></svg>
<div style="left:792px;top:545px;width:14px;height:14px;background:linear-gradient(90deg,#d2f6f6,#e6fbfb 60%,#c4f0f0);border:1px solid #7c7c7c;border-radius:2px;box-sizing:border-box"></div>
<svg style="left:792px;top:545px" width="14" height="14" viewBox="0 0 14 14"><path d="M2.8 7.6 L6.8 11.5 L13.3 2.8000000000000007" stroke="#2a82e6" stroke-width="3.1" fill="none" stroke-linecap="round" stroke-linejoin="round"/></svg>
<span class="tx" style="left:808px;top:547px;font-size:11px;line-height:11px;letter-spacing:-0.05px;font-weight:400;color:#000;">Stt Vacant</span>
<span class="tx" style="left:459px;top:569px;font-size:11px;line-height:11px;letter-spacing:-0.2px;font-weight:400;color:#000;transform:scaleY(1.12);transform-origin:0 9px;">Room Number</span>
<div style="left:562px;top:565px;width:56px;height:23px;background:#f0f0f0;border:1px solid #7a7a7a;box-sizing:border-box;"></div>
<div style="left:619px;top:565px;width:139px;height:23px;background:#f0f0f0;border:1px solid #7a7a7a;box-sizing:border-box;"></div>
<div style="left:760px;top:566px;width:22px;height:20px;background:#f6f0f0;border:1px solid #e4dada;border-radius:3px;box-sizing:border-box"></div>
<svg style="left:763.5px;top:569.0px" width="16" height="15" viewBox="0 0 16 15"><path d="M4 2 L6 0.5 L12 0.5 L14.5 2 L14.5 7.5 L12 9.5 L9 9.5 L4.5 14 L1 14 L0.5 11.5 L5 7 Z" fill="#8e8e8e"/></svg>
<div style="left:785px;top:565px;width:63px;height:21px;background:#fcfcfc;border:1px solid #d0d0d0;border-radius:3px;box-sizing:border-box"></div>
<span class="tx" style="left:795px;top:571px;font-size:11px;line-height:11px;letter-spacing:-0.2px;font-weight:400;color:#000;transform:scaleY(1.12);transform-origin:0 9px;">Calendar</span>
<div style="left:851px;top:565px;width:53px;height:21px;background:#f2f0f0;border:1px solid #e0dada;border-radius:3px;box-sizing:border-box"></div>
<span class="tx" style="left:866px;top:571px;font-size:11px;line-height:11px;letter-spacing:-0.2px;font-weight:400;color:#9a9a9a;transform:scaleY(1.12);transform-origin:0 9px;">Auto</span>
<span class="tx" style="left:460px;top:596px;font-size:11px;line-height:11px;letter-spacing:-0.2px;font-weight:400;color:#000;transform:scaleY(1.12);transform-origin:0 9px;">Rate Catagory</span>
<div style="left:562px;top:590px;width:343px;height:24px;background:#eeeeee;border:1px solid #c8c8c8;box-sizing:border-box;"></div>
<div style="left:567px;top:596px;width:12px;height:12px;border-radius:50%;background:#fff;border:3.5px solid #0b5fc8;box-sizing:border-box"></div>
<span class="tx" style="left:583px;top:598px;font-size:11px;line-height:11px;letter-spacing:-0.2px;font-weight:400;color:#000;transform:scaleY(1.12);transform-origin:0 9px;">Standard Rate Code</span>
<div style="left:691px;top:596px;width:12px;height:12px;border-radius:50%;background:#fff;border:1px solid #333;box-sizing:border-box"></div>
<span class="tx" style="left:708px;top:598px;font-size:11px;line-height:11px;letter-spacing:-0.2px;font-weight:400;color:#000;transform:scaleY(1.12);transform-origin:0 9px;">Package Rate</span>
<div style="left:785px;top:596px;width:12px;height:12px;border-radius:50%;background:#fff;border:1px solid #333;box-sizing:border-box"></div>
<span class="tx" style="left:801px;top:598px;font-size:11px;line-height:11px;letter-spacing:-0.2px;font-weight:400;color:#000;transform:scaleY(1.12);transform-origin:0 9px;">Spesial Inclusion</span>
<span class="tx" style="left:459px;top:621px;font-size:11px;line-height:11px;letter-spacing:-0.2px;font-weight:400;color:#000;transform:scaleY(1.12);transform-origin:0 9px;">Room Currency</span>
<div style="left:562px;top:616px;width:113px;height:24px;background:#fff;border:1px solid #7a7a7a;box-sizing:border-box;"></div>
<div style="left:656px;top:618px;width:17px;height:20px;background:#f4f4f4;border:1px solid #c0c0c0;border-radius:2px;box-sizing:border-box"></div>
<svg style="left:659.5px;top:625.0px" width="10" height="6" viewBox="0 0 10 6"><path d="M1 1 L5 5 L9 1" stroke="#555" stroke-width="1.1" fill="none"/></svg>
<span class="tx" style="left:566px;top:621px;font-size:11px;line-height:11px;letter-spacing:-0.2px;font-weight:400;color:#000;transform:scaleY(1.12);transform-origin:0 9px;">IDR</span>
<div style="left:681px;top:621px;width:13px;height:13px;background:#fff;border:1px solid #333;border-radius:3px;box-sizing:border-box"></div>
<span class="tx" style="left:732px;top:623px;font-size:11px;line-height:11px;letter-spacing:-0.2px;font-weight:400;color:#000;transform:scaleY(1.12);transform-origin:0 9px;">Bookeeping Rate</span>
<div style="left:820px;top:617px;width:84px;height:23px;background:#ffff00;border:1px solid #7a7a7a;box-sizing:border-box;"></div>
<span class="tx" style="left:500px;width:400px;text-align:right;top:623px;font-size:11px;line-height:11px;letter-spacing:-0.2px;font-weight:400;color:#000;transform:scaleY(1.12);transform-origin:0 9px;">1</span>
<span class="tx" style="left:459px;top:646px;font-size:11px;line-height:11px;letter-spacing:-0.2px;font-weight:400;color:#000;transform:scaleY(1.12);transform-origin:0 9px;">Rate Code</span>
<div style="left:562px;top:643px;width:140px;height:21px;background:#fff;border:1px solid #7a7a7a;box-sizing:border-box;"></div>
<div style="left:677px;top:645px;width:22px;height:18px;background:#fbfbfb;border:1px solid #d4d4d4;border-radius:3px;box-sizing:border-box"></div>
<svg style="left:680.0px;top:646.0px" width="16" height="16" viewBox="0 0 16 16"><defs><radialGradient id="lg" cx="40%" cy="35%" r="70%"><stop offset="0" stop-color="#fff"/><stop offset=".45" stop-color="#9fd6f6"/><stop offset="1" stop-color="#3d8fd0"/></radialGradient></defs><path d="M1.8 14.2 L6.3 9.7" stroke="#f07a1a" stroke-width="2.8" stroke-linecap="round"/><path d="M2.5 12.3 L4 13.8" stroke="#ffd040" stroke-width=".9"/><path d="M6 10 L7.4 8.6" stroke="#888" stroke-width="1.8"/><circle cx="10" cy="6" r="4.8" fill="url(#lg)" stroke="#4d8fc4" stroke-width=".7"/></svg>
<div style="left:708px;top:644px;width:23px;height:19px;background:#f8f8f8;border:1px solid #c8c8c8;border-radius:3px;box-sizing:border-box"></div>
<svg style="left:711.5px;top:647.5px" width="16" height="12" viewBox="0 0 16 12"><path d="M0.8 6 Q8 -2.2 15.2 6 Q8 14.2 0.8 6z" fill="#fff" stroke="#000" stroke-width="1.3"/><circle cx="8" cy="6" r="3.4" fill="#fff" stroke="#000" stroke-width="1.4"/><circle cx="8" cy="6" r="1.5" fill="#000"/></svg>
<span class="tx" style="left:754px;top:646px;font-size:11px;line-height:11px;letter-spacing:-0.2px;font-weight:400;color:#000;transform:scaleY(1.12);transform-origin:0 9px;">Dummy Rate</span>
<div style="left:820px;top:642px;width:84px;height:22px;background:#f0f0f0;border:1px solid #7a7a7a;box-sizing:border-box;"></div>
<span class="tx" style="left:500px;width:400px;text-align:right;top:648px;font-size:11px;line-height:11px;letter-spacing:-0.2px;font-weight:400;color:#000;transform:scaleY(1.12);transform-origin:0 9px;">0</span>
<span class="tx" style="left:459px;top:670px;font-size:11px;line-height:11px;letter-spacing:-0.2px;font-weight:400;color:#000;transform:scaleY(1.12);transform-origin:0 9px;">Normal Price</span>
<div style="left:562px;top:667px;width:112px;height:22px;background:#fff;border:1px solid #7a7a7a;box-sizing:border-box;"></div>
<span class="tx" style="left:270px;width:400px;text-align:right;top:672px;font-size:11px;line-height:11px;letter-spacing:-0.2px;font-weight:400;color:#0000ff;transform:scaleY(1.12);transform-origin:0 9px;">100,000</span>
<span class="tx" style="left:678px;top:672px;font-size:11px;line-height:11px;letter-spacing:-0.2px;font-weight:400;color:#000;transform:scaleY(1.12);transform-origin:0 9px;">Discount %</span>
<div style="left:744px;top:667px;width:40px;height:21px;background:#f0f0f0;border:1px solid #7a7a7a;box-sizing:border-box;"></div>
<span class="tx" style="left:380px;width:400px;text-align:right;top:672px;font-size:11px;line-height:11px;letter-spacing:-0.2px;font-weight:400;color:#8b0000;transform:scaleY(1.12);transform-origin:0 9px;">0.00</span>
<span class="tx" style="left:786px;top:672px;font-size:11px;line-height:11px;letter-spacing:-0.2px;font-weight:400;color:#000;transform:scaleY(1.12);transform-origin:0 9px;">-</span>
<div style="left:789px;top:667px;width:93px;height:21px;background:#f0f0f0;border:1px solid #7a7a7a;box-sizing:border-box;"></div>
<span class="tx" style="left:478px;width:400px;text-align:right;top:672px;font-size:11px;line-height:11px;letter-spacing:-0.2px;font-weight:400;color:#8b0000;transform:scaleY(1.12);transform-origin:0 9px;">0</span>
<div style="left:884px;top:667px;width:19px;height:21px;background:#fbfbfb;border:1px solid #d4d4d4;border-radius:3px;box-sizing:border-box"></div>
<svg style="left:885.5px;top:669.5px" width="16" height="16" viewBox="0 0 16 16"><defs><radialGradient id="lg" cx="40%" cy="35%" r="70%"><stop offset="0" stop-color="#fff"/><stop offset=".45" stop-color="#9fd6f6"/><stop offset="1" stop-color="#3d8fd0"/></radialGradient></defs><path d="M1.8 14.2 L6.3 9.7" stroke="#f07a1a" stroke-width="2.8" stroke-linecap="round"/><path d="M2.5 12.3 L4 13.8" stroke="#ffd040" stroke-width=".9"/><path d="M6 10 L7.4 8.6" stroke="#888" stroke-width="1.8"/><circle cx="10" cy="6" r="4.8" fill="url(#lg)" stroke="#4d8fc4" stroke-width=".7"/></svg>
<span class="tx" style="left:459px;top:694px;font-size:11px;line-height:11px;letter-spacing:-0.2px;font-weight:400;color:#000;transform:scaleY(1.12);transform-origin:0 9px;">Room Price</span>
<div style="left:562px;top:691px;width:112px;height:21px;background:#fff;border:1px solid #7a7a7a;box-sizing:border-box;"></div>
<span class="tx" style="left:270px;width:400px;text-align:right;top:696px;font-size:11px;line-height:11px;letter-spacing:-0.2px;font-weight:400;color:#000;transform:scaleY(1.12);transform-origin:0 9px;">100,000</span>
<span class="tx" style="left:678px;top:694px;font-size:11px;line-height:11px;letter-spacing:-0.2px;font-weight:400;color:#000;transform:scaleY(1.12);transform-origin:0 9px;">Promo Code</span>
<div style="left:744px;top:690px;width:139px;height:22px;background:#f0f0f0;border:1px solid #7a7a7a;box-sizing:border-box;"></div>
<span class="tx" style="left:459px;top:717px;font-size:11px;line-height:11px;letter-spacing:-0.2px;font-weight:400;color:#000;transform:scaleY(1.12);transform-origin:0 9px;">Room Rate /Night</span>
<div style="left:562px;top:715px;width:112px;height:20px;background:#f0f0f0;border:1px solid #7a7a7a;box-sizing:border-box;"></div>
<span class="tx" style="left:270px;width:400px;text-align:right;top:719px;font-size:11px;line-height:11px;letter-spacing:-0.2px;font-weight:400;color:#8b0000;transform:scaleY(1.12);transform-origin:0 9px;">100,000</span>
<div style="left:676px;top:714px;width:76px;height:21px;background:#eeeeee;border:1px solid #c8c8c8;box-sizing:border-box;"></div>
<div style="left:681px;top:718px;width:12px;height:12px;border-radius:50%;background:#fff;border:3.5px solid #0b5fc8;box-sizing:border-box"></div>
<span class="tx" style="left:697px;top:720px;font-size:11px;line-height:11px;letter-spacing:-0.2px;font-weight:400;color:#000;transform:scaleY(1.12);transform-origin:0 9px;">net</span>
<div style="left:716px;top:718px;width:12px;height:12px;border-radius:50%;background:#fff;border:1px solid #333;box-sizing:border-box"></div>
<span class="tx" style="left:733px;top:720px;font-size:11px;line-height:11px;letter-spacing:-0.2px;font-weight:400;color:#000;transform:scaleY(1.12);transform-origin:0 9px;">++</span>
<div style="left:754px;top:718px;width:13px;height:13px;background:#fff;border:1px solid #333;border-radius:3px;box-sizing:border-box"></div>
<span class="tx" style="left:459px;top:740px;font-size:11px;line-height:11px;letter-spacing:-0.2px;font-weight:400;color:#000;transform:scaleY(1.12);transform-origin:0 9px;">Include Breakfast</span>
<div style="left:562px;top:737px;width:191px;height:21px;background:#fff;border:1px solid #7a7a7a;box-sizing:border-box;"></div>
<div style="left:734px;top:739px;width:17px;height:17px;background:#f4f4f4;border:1px solid #c0c0c0;border-radius:2px;box-sizing:border-box"></div>
<svg style="left:737.5px;top:744.5px" width="10" height="6" viewBox="0 0 10 6"><path d="M1 1 L5 5 L9 1" stroke="#555" stroke-width="1.1" fill="none"/></svg>
<span class="tx" style="left:566px;top:742px;font-size:11px;line-height:11px;letter-spacing:-0.2px;font-weight:400;color:#000;transform:scaleY(1.12);transform-origin:0 9px;">FREE BF</span>
<div style="left:757px;top:737px;width:125px;height:21px;background:#f0f0f0;border:1px solid #7a7a7a;box-sizing:border-box;"></div>
<span class="tx" style="left:761px;top:743px;font-size:11px;line-height:11px;letter-spacing:-0.2px;font-weight:400;color:#000;transform:scaleY(1.12);transform-origin:0 9px;">IDR</span>
<span class="tx" style="left:478px;width:400px;text-align:right;top:743px;font-size:11px;line-height:11px;letter-spacing:-0.2px;font-weight:400;color:#000;transform:scaleY(1.12);transform-origin:0 9px;">0</span>
<span class="tx" style="left:459px;top:764px;font-size:11px;line-height:11px;letter-spacing:-0.2px;font-weight:400;color:#000;transform:scaleY(1.12);transform-origin:0 9px;">Extra Bed Charge</span>
<div style="left:562px;top:760px;width:170px;height:22px;background:#fff;border:1px solid #7a7a7a;box-sizing:border-box;"></div>
<div style="left:713px;top:762px;width:17px;height:18px;background:#f4f4f4;border:1px solid #c0c0c0;border-radius:2px;box-sizing:border-box"></div>
<svg style="left:716.5px;top:768.0px" width="10" height="6" viewBox="0 0 10 6"><path d="M1 1 L5 5 L9 1" stroke="#555" stroke-width="1.1" fill="none"/></svg>
<span class="tx" style="left:566px;top:765px;font-size:11px;line-height:11px;letter-spacing:-0.2px;font-weight:400;color:#000;transform:scaleY(1.12);transform-origin:0 9px;">NONE</span>
<div style="left:733px;top:761px;width:20px;height:20px;background:#f8f8f8;border:1px solid #d0d0d0;border-radius:3px;box-sizing:border-box"></div>
<svg style="left:735px;top:763px" width="16" height="16" viewBox="0 0 16 16"><path d="M6 1h4v5h5v4h-5v5h-4v-5h-5v-4h5z" fill="#2fb52f" stroke="#187818" stroke-width=".8"/></svg>
<div style="left:757px;top:760px;width:125px;height:21px;background:#f0f0f0;border:1px solid #7a7a7a;box-sizing:border-box;"></div>
<span class="tx" style="left:761px;top:766px;font-size:11px;line-height:11px;letter-spacing:-0.2px;font-weight:400;color:#000;transform:scaleY(1.12);transform-origin:0 9px;">IDR</span>
<span class="tx" style="left:478px;width:400px;text-align:right;top:766px;font-size:11px;line-height:11px;letter-spacing:-0.2px;font-weight:400;color:#000;transform:scaleY(1.12);transform-origin:0 9px;">0</span>
<span class="tx" style="left:458px;top:788px;font-size:11px;line-height:11px;letter-spacing:-0.2px;font-weight:400;color:#000;transform:scaleY(1.12);transform-origin:0 9px;">Total Room Inclusion</span>
<div style="left:562px;top:785px;width:112px;height:20px;background:#f0f0f0;border:1px solid #7a7a7a;box-sizing:border-box;"></div>
<span class="tx" style="left:270px;width:400px;text-align:right;top:790px;font-size:11px;line-height:11px;letter-spacing:-0.2px;font-weight:400;color:#8b0000;transform:scaleY(1.12);transform-origin:0 9px;">Rp0</span>
<div style="left:676px;top:786px;width:16px;height:18px;background:#f8f0f0;border:1px solid #e8dcdc;border-radius:3px;box-sizing:border-box"></div>
<svg style="left:677px;top:787px" width="14" height="16" viewBox="0 0 14 16"><path d="M5 1h4v5h4v4h-4v5h-4v-5h-4v-4h4z" fill="#9c9c9c"/></svg>
<span class="tx" style="left:698px;top:788px;font-size:11px;line-height:11px;letter-spacing:-0.2px;font-weight:400;color:#000;transform:scaleY(1.12);transform-origin:0 9px;">Inclusion ID</span>
<div style="left:757px;top:784px;width:125px;height:19px;background:#f0f0f0;border:1px solid #7a7a7a;box-sizing:border-box;"></div>
<div style="left:885px;top:785px;width:18px;height:18px;background:#f8f0f0;border:1px solid #e8dcdc;border-radius:3px;box-sizing:border-box"></div>
<svg style="left:886px;top:786px" width="16" height="16" viewBox="0 0 16 16"><path d="M2 2h3l3 3l3-3h3v3l-3 3l3 3v3h-3l-3-3l-3 3h-3v-3l3-3l-3-3z" fill="#9c9c9c"/></svg>
<div style="left:1452px;top:185px;width:1px;height:626px;background:#8a8a8a"></div>
<div style="left:910px;top:189px;width:535px;height:174px;background:#dcdcdc;border:1px solid #000;box-sizing:border-box"></div>
<div style="left:911px;top:190px;width:10px;height:172px;background:#f0f0f0"></div>
<div style="left:921px;top:190px;width:1px;height:172px;background:#000"></div>
<div style="left:922px;top:190px;width:522px;height:18px;background:#000"></div>
<div style="left:922px;top:190px;width:520px;height:1px;background:#fff"></div>
<div style="left:951px;top:191px;width:1px;height:17px;background:#fff"></div>
<div style="left:1017px;top:191px;width:1px;height:17px;background:#fff"></div>
<div style="left:1350px;top:191px;width:1px;height:17px;background:#fff"></div>
<div style="left:1441px;top:191px;width:1px;height:17px;background:#fff"></div>
<span class="tx" style="left:636px;width:600px;text-align:center;top:194px;font-size:11px;line-height:11px;letter-spacing:-0.2px;font-weight:400;color:#fff;transform:scaleY(1.12);transform-origin:0 9px;">No</span>
<span class="tx" style="left:684px;width:600px;text-align:center;top:194px;font-size:11px;line-height:11px;letter-spacing:-0.2px;font-weight:400;color:#fff;transform:scaleY(1.12);transform-origin:0 9px;">Date</span>
<span class="tx" style="left:884px;width:600px;text-align:center;top:194px;font-size:11px;line-height:11px;letter-spacing:-0.2px;font-weight:400;color:#fff;transform:scaleY(1.12);transform-origin:0 9px;">Other Inclusion</span>
<span class="tx" style="left:1096px;width:600px;text-align:center;top:194px;font-size:11px;line-height:11px;letter-spacing:-0.2px;font-weight:400;color:#fff;transform:scaleY(1.12);transform-origin:0 9px;">Total</span>
<div style="left:911px;top:207px;width:10px;height:1px;background:#000"></div>
<div style="left:912px;top:208px;width:8px;height:1px;background:#fff"></div>
<div style="left:911px;top:224px;width:10px;height:1px;background:#000"></div>
<div style="left:912px;top:225px;width:8px;height:1px;background:#fff"></div>
<div style="left:911px;top:241px;width:10px;height:1px;background:#000"></div>
<div style="left:912px;top:242px;width:8px;height:1px;background:#fff"></div>
<div style="left:911px;top:258px;width:10px;height:1px;background:#000"></div>
<div style="left:912px;top:259px;width:8px;height:1px;background:#fff"></div>
<div style="left:911px;top:275px;width:10px;height:1px;background:#000"></div>
<div style="left:912px;top:276px;width:8px;height:1px;background:#fff"></div>
<div style="left:911px;top:292px;width:10px;height:1px;background:#000"></div>
<div style="left:912px;top:293px;width:8px;height:1px;background:#fff"></div>
<div style="left:911px;top:309px;width:10px;height:1px;background:#000"></div>
<div style="left:912px;top:310px;width:8px;height:1px;background:#fff"></div>
<div style="left:911px;top:326px;width:10px;height:1px;background:#000"></div>
<div style="left:912px;top:327px;width:8px;height:1px;background:#fff"></div>
<div style="left:911px;top:343px;width:10px;height:1px;background:#000"></div>
<div style="left:912px;top:344px;width:8px;height:1px;background:#fff"></div>
<div style="left:911px;top:360px;width:10px;height:1px;background:#000"></div>
<div style="left:912px;top:361px;width:8px;height:1px;background:#fff"></div>
<div style="left:910px;top:365px;width:246px;height:15px;background:#000"></div>
<span class="tx" style="left:733.0px;width:600px;text-align:center;top:367px;font-size:11px;line-height:11px;letter-spacing:-0.2px;font-weight:400;color:#fff;transform:scaleY(1.12);transform-origin:0 9px;">Room Package</span>
<div style="left:910px;top:381px;width:245px;height:75px;border:1px solid #7a7a7a;box-shadow:1px 1px 0 #fff;box-sizing:border-box"></div>
<span class="tx" style="left:920px;top:391px;font-size:11px;line-height:11px;letter-spacing:-0.2px;font-weight:400;color:#000;transform:scaleY(1.12);transform-origin:0 9px;">Package Code</span>
<div style="left:1000px;top:386px;width:107px;height:20px;background:#f0f0f0;border:1px solid #7a7a7a;box-sizing:border-box;"></div>
<div style="left:1110px;top:387px;width:18px;height:18px;background:#f6f0f0;border:1px solid #e4dada;border-radius:3px;box-sizing:border-box"></div>
<svg style="left:1111.5px;top:389.0px" width="16" height="15" viewBox="0 0 16 15"><path d="M4 2 L6 0.5 L12 0.5 L14.5 2 L14.5 7.5 L12 9.5 L9 9.5 L4.5 14 L1 14 L0.5 11.5 L5 7 Z" fill="#8e8e8e"/></svg>
<div style="left:1132px;top:387px;width:17px;height:18px;background:#f8f0f0;border:1px solid #e8dcdc;border-radius:3px;box-sizing:border-box"></div>
<svg style="left:1137px;top:392px" width="8" height="8" viewBox="0 0 8 8"><path d="M4 0.5V7.5M0.5 4H7.5" stroke="#888" stroke-width="1.2"/></svg>
<span class="tx" style="left:920px;top:413px;font-size:11px;line-height:11px;letter-spacing:-0.2px;font-weight:400;color:#000;transform:scaleY(1.12);transform-origin:0 9px;">Package Name</span>
<div style="left:1000px;top:408px;width:153px;height:21px;background:#f0f0f0;border:1px solid #7a7a7a;box-sizing:border-box;"></div>
<span class="tx" style="left:918px;top:435px;font-size:11px;line-height:11px;letter-spacing:-0.2px;font-weight:400;color:#000;transform:scaleY(1.12);transform-origin:0 9px;">Package Price</span>
<div style="left:1000px;top:430px;width:112px;height:22px;background:#f0f0f0;border:1px solid #7a7a7a;box-sizing:border-box;"></div>
<span class="tx" style="left:1003px;top:436px;font-size:11px;line-height:11px;letter-spacing:-0.2px;font-weight:400;color:#000;transform:scaleY(1.12);transform-origin:0 9px;">IDR</span>
<span class="tx" style="left:707px;width:400px;text-align:right;top:436px;font-size:11px;line-height:11px;letter-spacing:-0.2px;font-weight:400;color:#9a9a9a;transform:scaleY(1.12);transform-origin:0 9px;">0.00</span>
<div style="left:1114px;top:433px;width:18px;height:16px;background:#f8f0f0;border:1px solid #e8dcdc;border-radius:3px;box-sizing:border-box"></div>
<svg style="left:1119px;top:435px" width="8" height="12" viewBox="0 0 8 12"><path d="M0.5 0.5 L7.5 6 L0.5 11.5z" fill="#9a9a9a"/></svg>
<div style="left:910px;top:458px;width:246px;height:15px;background:#000"></div>
<span class="tx" style="left:733.0px;width:600px;text-align:center;top:460px;font-size:11px;line-height:11px;letter-spacing:-0.2px;font-weight:400;color:#fff;transform:scaleY(1.12);transform-origin:0 9px;">Rate Information</span>
<div style="left:911px;top:474px;width:244px;height:193px;border:1px solid #7a7a7a;box-shadow:1px 1px 0 #fff;box-sizing:border-box"></div>
<span class="tx" style="left:918px;top:481px;font-size:11px;line-height:11px;letter-spacing:-0.2px;font-weight:400;color:#000;transform:scaleY(1.12);transform-origin:0 9px;">Total Room Charge</span>
<div style="left:1031px;top:477px;width:120px;height:21px;background:#f0f0f0;border:1px solid #7a7a7a;box-sizing:border-box;"></div>
<span class="tx" style="left:747px;width:400px;text-align:right;top:482px;font-size:11px;line-height:11px;letter-spacing:-0.2px;font-weight:400;color:#000;transform:scaleY(1.12);transform-origin:0 9px;">100,000</span>
<span class="tx" style="left:918px;top:503px;font-size:11px;line-height:11px;letter-spacing:-0.2px;font-weight:400;color:#000;transform:scaleY(1.12);transform-origin:0 9px;">Total Other Inclusion</span>
<div style="left:1031px;top:499px;width:120px;height:21px;background:#f0f0f0;border:1px solid #7a7a7a;box-sizing:border-box;"></div>
<span class="tx" style="left:747px;width:400px;text-align:right;top:504px;font-size:11px;line-height:11px;letter-spacing:-0.2px;font-weight:400;color:#000;transform:scaleY(1.12);transform-origin:0 9px;">0</span>
<span class="tx" style="left:918px;top:525px;font-size:11px;line-height:11px;letter-spacing:-0.2px;font-weight:400;color:#000;transform:scaleY(1.12);transform-origin:0 9px;">Total Extra Bed Charge</span>
<div style="left:1031px;top:521px;width:120px;height:21px;background:#f0f0f0;border:1px solid #7a7a7a;box-sizing:border-box;"></div>
<span class="tx" style="left:747px;width:400px;text-align:right;top:526px;font-size:11px;line-height:11px;letter-spacing:-0.2px;font-weight:400;color:#000;transform:scaleY(1.12);transform-origin:0 9px;">0</span>
<span class="tx" style="left:918px;top:547px;font-size:11px;line-height:11px;letter-spacing:-0.2px;font-weight:400;color:#000;transform:scaleY(1.12);transform-origin:0 9px;">Total Additional Charge</span>
<div style="left:1031px;top:543px;width:120px;height:21px;background:#f0f0f0;border:1px solid #7a7a7a;box-sizing:border-box;"></div>
<span class="tx" style="left:747px;width:400px;text-align:right;top:548px;font-size:11px;line-height:11px;letter-spacing:-0.2px;font-weight:400;color:#000;transform:scaleY(1.12);transform-origin:0 9px;">0</span>
<div style="left:917px;top:566px;width:234px;height:2px;background:#666"></div>
<span class="tx" style="left:918px;top:574px;font-size:11px;line-height:11px;letter-spacing:-0.2px;font-weight:400;color:#000;transform:scaleY(1.12);transform-origin:0 9px;">Total Amount IDR</span>
<div style="left:1031px;top:570px;width:120px;height:21px;background:#f0f0f0;border:1px solid #7a7a7a;box-sizing:border-box;"></div>
<span class="tx" style="left:747px;width:400px;text-align:right;top:575px;font-size:11px;line-height:11px;letter-spacing:-0.2px;font-weight:400;color:#000;transform:scaleY(1.12);transform-origin:0 9px;">100,000</span>
<span class="tx" style="left:918px;top:597px;font-size:11px;line-height:11px;letter-spacing:-0.2px;font-weight:400;color:#000;transform:scaleY(1.12);transform-origin:0 9px;">Total Deposit IDR</span>
<div style="left:1031px;top:593px;width:120px;height:21px;background:#f0f0f0;border:1px solid #7a7a7a;box-sizing:border-box;"></div>
<span class="tx" style="left:747px;width:400px;text-align:right;top:598px;font-size:11px;line-height:11px;letter-spacing:-0.2px;font-weight:400;color:#000;transform:scaleY(1.12);transform-origin:0 9px;">100,000</span>
<div style="left:917px;top:616px;width:234px;height:2px;background:#666"></div>
<span class="tx" style="left:918px;top:625px;font-size:11px;line-height:11px;letter-spacing:-0.2px;font-weight:400;color:#000;transform:scaleY(1.12);transform-origin:0 9px;">Outstanding Balance</span>
<div style="left:1031px;top:620px;width:120px;height:21px;background:#f0f0f0;border:1px solid #7a7a7a;box-sizing:border-box;"></div>
<span class="tx" style="left:747px;width:400px;text-align:right;top:625px;font-size:11px;line-height:11px;letter-spacing:-0.2px;font-weight:400;color:#000;transform:scaleY(1.12);transform-origin:0 9px;">0</span>
<span class="tx" style="left:918px;top:648px;font-size:11px;line-height:11px;letter-spacing:-0.2px;font-weight:400;color:#000;transform:scaleY(1.12);transform-origin:0 9px;">Reservation Expired</span>
<div style="left:1031px;top:643px;width:87px;height:22px;background:#f0f0f0;border:1px solid #7a7a7a;box-sizing:border-box;"></div>
<span class="tx" style="left:1035px;top:648px;font-size:11px;line-height:11px;letter-spacing:-0.2px;font-weight:400;color:#ff0000;transform:scaleY(1.12);transform-origin:0 9px;">26-08-2024</span>
<div style="left:1123px;top:646px;width:15px;height:14px;background:linear-gradient(90deg,#d2f6f6,#e6fbfb 60%,#c4f0f0);border:1px solid #7c7c7c;border-radius:2px;box-sizing:border-box"></div>
<div style="left:911px;top:670px;width:244px;height:138px;background:#fff;border:1px solid #000;box-sizing:border-box"></div>
<div style="left:912px;top:671px;width:10px;height:136px;background:#f0f0f0"></div>
<div style="left:922px;top:671px;width:1px;height:136px;background:#000"></div>
<div style="left:923px;top:671px;width:229px;height:17px;background:#000"></div>
<div style="left:923px;top:671px;width:227px;height:1px;background:#fff"></div>
<div style="left:960px;top:672px;width:1px;height:16px;background:#fff"></div>
<div style="left:961px;top:672px;width:1px;height:16px;background:#888"></div>
<div style="left:1024px;top:672px;width:1px;height:16px;background:#fff"></div>
<div style="left:1025px;top:672px;width:1px;height:16px;background:#888"></div>
<div style="left:1079px;top:672px;width:1px;height:16px;background:#fff"></div>
<div style="left:1080px;top:672px;width:1px;height:16px;background:#888"></div>
<div style="left:1150px;top:672px;width:1px;height:16px;background:#fff"></div>
<span class="tx" style="left:641px;width:600px;text-align:center;top:675px;font-size:11px;line-height:11px;letter-spacing:-0.2px;font-weight:400;color:#ffff00;transform:scaleY(1.12);transform-origin:0 9px;">Room</span>
<span class="tx" style="left:692px;width:600px;text-align:center;top:675px;font-size:11px;line-height:11px;letter-spacing:-0.2px;font-weight:400;color:#ffff00;transform:scaleY(1.12);transform-origin:0 9px;">Room Type</span>
<span class="tx" style="left:752px;width:600px;text-align:center;top:675px;font-size:11px;line-height:11px;letter-spacing:-0.2px;font-weight:400;color:#ffff00;transform:scaleY(1.12);transform-origin:0 9px;">No.Res</span>
<span class="tx" style="left:815px;width:600px;text-align:center;top:675px;font-size:11px;line-height:11px;letter-spacing:-0.2px;font-weight:400;color:#ffff00;transform:scaleY(1.12);transform-origin:0 9px;">Price</span>
<div style="left:923px;top:689px;width:231px;height:17px;background:#0078d7"></div>
<div style="left:960px;top:689px;width:1px;height:118px;background:#c8c8c8"></div>
<div style="left:1024px;top:689px;width:1px;height:118px;background:#c8c8c8"></div>
<div style="left:1079px;top:689px;width:1px;height:118px;background:#c8c8c8"></div>
<div style="left:1151px;top:689px;width:1px;height:118px;background:#c8c8c8"></div>
<div style="left:923px;top:705px;width:229px;height:1px;background:#c8c8c8"></div>
<div style="left:912px;top:705px;width:10px;height:1px;background:#000"></div>
<div style="left:923px;top:722px;width:229px;height:1px;background:#c8c8c8"></div>
<div style="left:912px;top:722px;width:10px;height:1px;background:#000"></div>
<div style="left:923px;top:739px;width:229px;height:1px;background:#c8c8c8"></div>
<div style="left:912px;top:739px;width:10px;height:1px;background:#000"></div>
<div style="left:923px;top:756px;width:229px;height:1px;background:#c8c8c8"></div>
<div style="left:912px;top:756px;width:10px;height:1px;background:#000"></div>
<div style="left:923px;top:773px;width:229px;height:1px;background:#c8c8c8"></div>
<div style="left:912px;top:773px;width:10px;height:1px;background:#000"></div>
<div style="left:923px;top:790px;width:229px;height:1px;background:#c8c8c8"></div>
<div style="left:912px;top:790px;width:10px;height:1px;background:#000"></div>
<div style="left:923px;top:807px;width:229px;height:1px;background:#c8c8c8"></div>
<div style="left:912px;top:807px;width:10px;height:1px;background:#000"></div>
<div style="left:915px;top:693px;width:0;height:0;border-top:4px solid transparent;border-bottom:4px solid transparent;border-left:5px solid #000"></div>
<span class="tx" style="left:925px;top:692px;font-size:11px;line-height:11px;letter-spacing:-0.2px;font-weight:400;color:#fff;transform:scaleY(1.12);transform-origin:0 9px;">201</span>
<span class="tx" style="left:964px;top:692px;font-size:11px;line-height:11px;letter-spacing:-0.2px;font-weight:400;color:#fff;transform:scaleY(1.12);transform-origin:0 9px;">KING</span>
<span class="tx" style="left:1027px;top:692px;font-size:11px;line-height:11px;letter-spacing:-0.2px;font-weight:400;color:#fff;transform:scaleY(1.12);transform-origin:0 9px;">NT5D6</span>
<span class="tx" style="left:748px;width:400px;text-align:right;top:692px;font-size:11px;line-height:11px;letter-spacing:-0.2px;font-weight:400;color:#fff;transform:scaleY(1.12);transform-origin:0 9px;">100,000</span>
<div style="left:1158px;top:365px;width:289px;height:15px;background:#000"></div>
<span class="tx" style="left:1002.5px;width:600px;text-align:center;top:367px;font-size:11px;line-height:11px;letter-spacing:-0.2px;font-weight:400;color:#fff;transform:scaleY(1.12);transform-origin:0 9px;">Additional Charge</span>
<div style="left:1159px;top:381px;width:286px;height:75px;border:1px solid #7a7a7a;box-shadow:1px 1px 0 #fff;box-sizing:border-box"></div>
<span class="tx" style="left:1161px;top:389px;font-size:11px;line-height:11px;letter-spacing:-0.2px;font-weight:400;color:#000;transform:scaleY(1.12);transform-origin:0 9px;">Additonal Code</span>
<div style="left:1246px;top:384px;width:113px;height:21px;background:#f0f0f0;border:1px solid #7a7a7a;box-sizing:border-box;"></div>
<div style="left:1361px;top:386px;width:20px;height:18px;background:#fbfbfb;border:1px solid #d4d4d4;border-radius:3px;box-sizing:border-box"></div>
<svg style="left:1363.0px;top:387.0px" width="16" height="16" viewBox="0 0 16 16"><defs><radialGradient id="lg" cx="40%" cy="35%" r="70%"><stop offset="0" stop-color="#fff"/><stop offset=".45" stop-color="#9fd6f6"/><stop offset="1" stop-color="#3d8fd0"/></radialGradient></defs><path d="M1.8 14.2 L6.3 9.7" stroke="#f07a1a" stroke-width="2.8" stroke-linecap="round"/><path d="M2.5 12.3 L4 13.8" stroke="#ffd040" stroke-width=".9"/><path d="M6 10 L7.4 8.6" stroke="#888" stroke-width="1.8"/><circle cx="10" cy="6" r="4.8" fill="url(#lg)" stroke="#4d8fc4" stroke-width=".7"/></svg>
<div style="left:1384px;top:386px;width:19px;height:18px;background:#fdfdfd;border:1px solid #cfcfcf;border-radius:3px;box-sizing:border-box"></div>
<svg style="left:1389.5px;top:391.0px" width="8" height="8" viewBox="0 0 8 8"><path d="M4 1V7M0.6 4H7.4" stroke="#000" stroke-width="1.5"/></svg>
<span class="tx" style="left:1162px;top:411px;font-size:11px;line-height:11px;letter-spacing:-0.2px;font-weight:400;color:#000;transform:scaleY(1.12);transform-origin:0 9px;">Aditional Name</span>
<div style="left:1246px;top:406px;width:196px;height:21px;background:#f0f0f0;border:1px solid #7a7a7a;box-sizing:border-box;"></div>
<span class="tx" style="left:1163px;top:433px;font-size:11px;line-height:11px;letter-spacing:-0.2px;font-weight:400;color:#000;transform:scaleY(1.12);transform-origin:0 9px;">Additional Price</span>
<div style="left:1246px;top:428px;width:111px;height:22px;background:#f0f0f0;border:1px solid #7a7a7a;box-sizing:border-box;"></div>
<span class="tx" style="left:1249px;top:434px;font-size:11px;line-height:11px;letter-spacing:-0.2px;font-weight:400;color:#000;transform:scaleY(1.12);transform-origin:0 9px;">IDR</span>
<span class="tx" style="left:952px;width:400px;text-align:right;top:434px;font-size:11px;line-height:11px;letter-spacing:-0.2px;font-weight:400;color:#9a9a9a;transform:scaleY(1.12);transform-origin:0 9px;">0.00</span>
<div style="left:1360px;top:431px;width:20px;height:17px;background:#fafafa;border:1px solid #d8d8d8;border-radius:3px;box-sizing:border-box"></div>
<svg style="left:1366px;top:434px" width="9" height="12" viewBox="0 0 9 12"><path d="M0.5 0.5 L8.5 6 L0.5 11.5z" fill="#001a80"/></svg>
<div style="left:1158px;top:458px;width:289px;height:15px;background:#000"></div>
<span class="tx" style="left:1002.5px;width:600px;text-align:center;top:460px;font-size:11px;line-height:11px;letter-spacing:-0.2px;font-weight:400;color:#fff;transform:scaleY(1.12);transform-origin:0 9px;">Comission Detail</span>
<div style="left:1159px;top:474px;width:286px;height:74px;border:1px solid #7a7a7a;box-shadow:1px 1px 0 #fff;box-sizing:border-box"></div>
<span class="tx" style="left:1163px;top:482px;font-size:11px;line-height:11px;letter-spacing:-0.2px;font-weight:400;color:#000;transform:scaleY(1.12);transform-origin:0 9px;">AP Comission</span>
<div style="left:1261px;top:477px;width:45px;height:21px;background:#f0f0f0;border:1px solid #7a7a7a;box-sizing:border-box;"></div>
<span class="tx" style="left:901px;width:400px;text-align:right;top:482px;font-size:11px;line-height:11px;letter-spacing:-0.2px;font-weight:400;color:#000;transform:scaleY(1.12);transform-origin:0 9px;">0.00</span>
<div style="left:1307px;top:477px;width:115px;height:21px;background:#f0f0f0;border:1px solid #7a7a7a;box-sizing:border-box;"></div>
<span class="tx" style="left:1018px;width:400px;text-align:right;top:482px;font-size:11px;line-height:11px;letter-spacing:-0.2px;font-weight:400;color:#000;transform:scaleY(1.12);transform-origin:0 9px;">0</span>
<div style="left:1426px;top:481px;width:13px;height:13px;background:#fff;border:1px solid #333;border-radius:3px;box-sizing:border-box"></div>
<span class="tx" style="left:1163px;top:506px;font-size:11px;line-height:11px;letter-spacing:-0.2px;font-weight:400;color:#000;transform:scaleY(1.12);transform-origin:0 9px;">Agent Comission</span>
<div style="left:1261px;top:500px;width:45px;height:21px;background:#f0f0f0;border:1px solid #7a7a7a;box-sizing:border-box;"></div>
<span class="tx" style="left:901px;width:400px;text-align:right;top:505px;font-size:11px;line-height:11px;letter-spacing:-0.2px;font-weight:400;color:#000;transform:scaleY(1.12);transform-origin:0 9px;">0.00</span>
<div style="left:1307px;top:500px;width:116px;height:21px;background:#f0f0f0;border:1px solid #7a7a7a;box-sizing:border-box;"></div>
<span class="tx" style="left:1019px;width:400px;text-align:right;top:505px;font-size:11px;line-height:11px;letter-spacing:-0.2px;font-weight:400;color:#000;transform:scaleY(1.12);transform-origin:0 9px;">0</span>
<div style="left:1425px;top:504px;width:13px;height:13px;background:#fff;border:1px solid #333;border-radius:3px;box-sizing:border-box"></div>
<span class="tx" style="left:1163px;top:528px;font-size:11px;line-height:11px;letter-spacing:-0.2px;font-weight:400;color:#000;transform:scaleY(1.12);transform-origin:0 9px;">Comission USD</span>
<div style="left:1261px;top:523px;width:88px;height:21px;background:#f0f0f0;border:1px solid #7a7a7a;box-sizing:border-box;"></div>
<span class="tx" style="left:945px;width:400px;text-align:right;top:528px;font-size:11px;line-height:11px;letter-spacing:-0.2px;font-weight:400;color:#000;transform:scaleY(1.12);transform-origin:0 9px;">0.00</span>
<div style="left:1352px;top:527px;width:13px;height:13px;background:#fff;border:1px solid #333;border-radius:3px;box-sizing:border-box"></div>
<div style="left:1158px;top:548px;width:139px;height:60px;background:#dedede;border:1px solid;border-color:#fff #6e6e6e #6e6e6e #fff;box-sizing:border-box"></div>
<div style="left:1297px;top:548px;width:149px;height:60px;background:#dedede;border:1px solid;border-color:#fff #6e6e6e #6e6e6e #fff;box-sizing:border-box"></div>
<svg style="left:1197px;top:564px" width="30" height="30" viewBox="0 0 30 30"><rect x="0.5" y="0.5" width="29" height="29" rx="4" fill="#2a7de1" stroke="#1a5aa8"/><rect x="5" y="1" width="20" height="13" fill="#eef3fa"/><path d="M7 4h16M7 7h16M7 10h16" stroke="#b8c8dc"/><rect x="8" y="19" width="14" height="10" fill="#e8e8e8"/><rect x="10" y="21" width="4" height="6" fill="#333"/></svg>
<span class="tx" style="left:1231px;top:574px;font-size:11px;line-height:11px;letter-spacing:-0.3px;font-weight:400;color:#000;transform:scaleY(1.12);transform-origin:0 9px;"><u>S</u>AVE</span>
<svg style="left:1336px;top:562px" width="34" height="34" viewBox="0 0 34 34"><path d="M10 0.5h13l10 10v13l-10 10h-13l-10-10v-13z" fill="#d40000" stroke="#700000"/><path d="M10.8 2.5h11.4l8.8 8.8v11.4l-8.8 8.8h-11.4l-8.8-8.8v-11.4z" fill="none" stroke="#ffb0b0" stroke-width=".8"/><g fill="#f3a872" stroke="#6a2a08" stroke-width=".7"><rect x="8.5" y="8" width="3.6" height="12" rx="1.8"/><rect x="12" y="5" width="3.6" height="15" rx="1.8"/><rect x="15.5" y="4.5" width="3.6" height="15.5" rx="1.8"/><rect x="19" y="6.5" width="3.6" height="13.5" rx="1.8"/><path d="M8.5 16 V23 Q9 29.5 15.5 29.5 Q20.5 29.5 23.5 25 L28.5 18 Q29 15 26 16.5 L22.5 20.5 V16 Z"/></g></svg>
<span class="tx" style="left:1370px;top:574px;font-size:11px;line-height:11px;letter-spacing:-0.3px;font-weight:400;color:#000;transform:scaleY(1.12);transform-origin:0 9px;"><u>C</u>LOSE</span>
<div style="left:1160px;top:611px;width:64px;height:20px;background:#fcfcfc;border:1px solid #d8d0d0;border-radius:4px;box-sizing:border-box"></div>
<span class="tx" style="left:892.0px;width:600px;text-align:center;top:616px;font-size:11px;line-height:11px;letter-spacing:-0.2px;font-weight:400;color:#000;transform:scaleY(1.12);transform-origin:0 9px;">FO Request</span>
<div style="left:1226px;top:611px;width:64px;height:20px;background:#fcfcfc;border:1px solid #d8d0d0;border-radius:4px;box-sizing:border-box"></div>
<span class="tx" style="left:958.0px;width:600px;text-align:center;top:616px;font-size:11px;line-height:11px;letter-spacing:-0.2px;font-weight:400;color:#000;transform:scaleY(1.12);transform-origin:0 9px;">FB Request</span>
<div style="left:1293px;top:611px;width:69px;height:20px;background:#fcfcfc;border:1px solid #d8d0d0;border-radius:4px;box-sizing:border-box"></div>
<span class="tx" style="left:1027.5px;width:600px;text-align:center;top:616px;font-size:11px;line-height:11px;letter-spacing:-0.2px;font-weight:400;color:#000;transform:scaleY(1.12);transform-origin:0 9px;">HK Request</span>
<div style="left:1365px;top:611px;width:83px;height:20px;background:#fcfcfc;border:1px solid #d8d0d0;border-radius:4px;box-sizing:border-box"></div>
<span class="tx" style="left:1106.5px;width:600px;text-align:center;top:616px;font-size:11px;line-height:11px;letter-spacing:-0.2px;font-weight:400;color:#000;transform:scaleY(1.12);transform-origin:0 9px;">SPA Request</span>
<div style="left:1160px;top:634px;width:78px;height:21px;background:#fcfcfc;border:1px solid #d8d0d0;border-radius:4px;box-sizing:border-box"></div>
<span class="tx" style="left:899px;width:600px;text-align:center;top:639px;font-size:11px;line-height:11px;letter-spacing:-0.2px;font-weight:400;color:#000;transform:scaleY(1.12);transform-origin:0 9px;">Trace Note</span>
<div style="left:1242px;top:633px;width:77px;height:22px;background:#f0f0f0;border:1px solid #7a7a7a;box-sizing:border-box;"></div>
<span class="tx" style="left:1246px;top:638px;font-size:11px;line-height:11px;letter-spacing:-0.2px;font-weight:400;color:#000;transform:scaleY(1.12);transform-origin:0 9px;">27-08-2024</span>
<div style="left:1322px;top:636px;width:15px;height:14px;background:linear-gradient(90deg,#d2f6f6,#e6fbfb 60%,#c4f0f0);border:1px solid #7c7c7c;border-radius:2px;box-sizing:border-box"></div>
<span class="tx" style="left:1339px;top:638px;font-size:11px;line-height:11px;letter-spacing:-0.05px;font-weight:400;color:#000;">Tracing Valid Date</span>
<div style="left:1159px;top:657px;width:289px;height:151px;background:#ffff80;border:1px solid #7a7a7a;box-sizing:border-box"></div>
<div style="left:1430px;top:658px;width:17px;height:149px;background:#f0f0f0"></div>
</body></html>
